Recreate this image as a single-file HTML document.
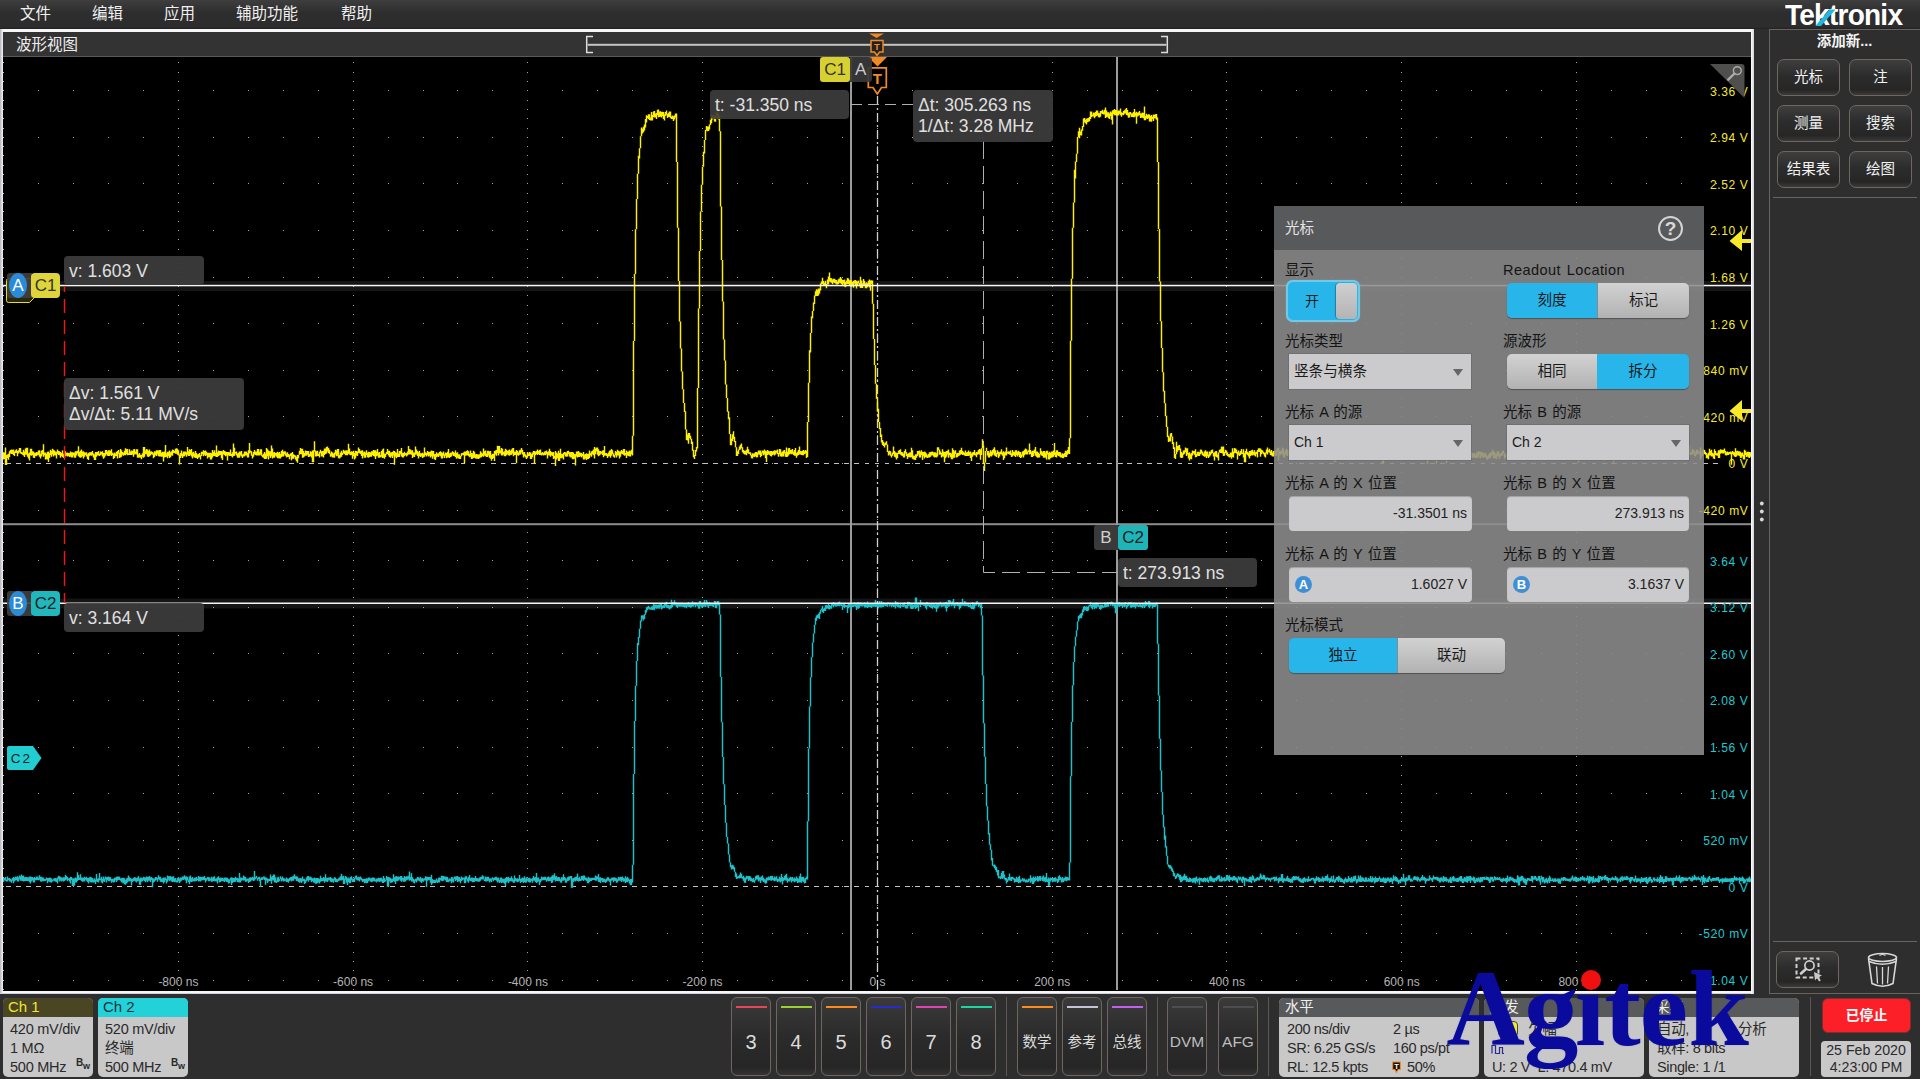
<!DOCTYPE html><html lang="zh"><head><meta charset="utf-8"><title>Tektronix</title><style>
*{box-sizing:border-box;margin:0;padding:0}
html,body{width:1920px;height:1079px;overflow:hidden;background:#2e2e2e}
body{position:relative;font-family:"Liberation Sans","Noto Sans CJK SC",sans-serif;color:#e6e6e6;font-size:15px}
.abs{position:absolute}
#menubar{left:0;top:0;width:1920px;height:29px;background:linear-gradient(#3e3e3e 0,#2d2d2d 13px,#2d2d2d 27px,#212121 29px)}
.mi{position:absolute;top:0;height:29px;line-height:28px;font-size:15.5px;color:#f0f0f0;white-space:nowrap}
#frame{left:0;top:29px;width:1754px;height:965px;background:linear-gradient(90deg,#b4b4bc,#f6f6f8 3px,#f6f6f8);border-bottom:1px solid #d2d2da}
#frameR{left:1751px;top:29px;width:3px;height:965px;background:linear-gradient(90deg,#ffffff,#d0d0d8)}
#titlebar{left:3px;top:32px;width:1748px;height:25px;background:#333;border-bottom:1px solid #5a5a5a}
#titlebar span{position:absolute;left:13px;top:0;line-height:25px;font-size:15.5px;color:#eee}
#plot{left:3px;top:57px;width:1748px;height:934px;background:#000}
svg{position:absolute;left:0;top:0}
.ro{position:absolute;background:rgba(60,60,60,.93);border-radius:4px;color:#e0e0e0;font-size:17.5px;line-height:21.6px;padding:4.6px 0 0 5px;white-space:nowrap}
.ylab{position:absolute;right:171.5px;font-size:12px;letter-spacing:.65px;line-height:14px;white-space:nowrap;text-align:right}
.xlab{position:absolute;top:975px;width:80px;text-align:center;font-size:12px;line-height:14px;color:#b4b4b4;white-space:nowrap}
/* right panel */
#rpanel{left:1769px;top:29px;width:152px;height:965px;border-left:1px solid #6a625d;border-top:1px solid #6a625d;border-bottom:1px solid #6a625d}
.btn{position:absolute;width:63px;height:37px;border:1px solid #6f6660;border-radius:7px;background:linear-gradient(#3e3e3e,#2c2c2c 45%,#262626 85%,#3a3a3a);color:#f2f2f2;font-size:14.5px;line-height:35px;text-align:center;white-space:nowrap}
.sep{position:absolute;height:1px;background:#6a625d}
/* bottom */
.chb{position:absolute;top:998px;width:90px;height:79px;border-radius:5px;background:#c8c8c8;overflow:hidden;color:#2a2a2a;font-size:14.5px;letter-spacing:-.25px}
.chb .h{height:19px;line-height:18px;padding-left:5px;font-size:15px;letter-spacing:0}
.chb .l{position:absolute;left:7px;white-space:nowrap;line-height:18px}
.nb{position:absolute;top:997px;width:40px;height:79px;border:1px solid #6f6660;border-radius:6px;background:linear-gradient(#3a3a3a,#2b2b2b 50%,#262626 90%,#333);color:#dcdcdc;text-align:center}
.nb i{position:absolute;left:3.5px;right:3.5px;top:7.5px;height:2px;display:block}
.nb span{position:absolute;left:0;right:0;top:32px;line-height:24px;font-size:20px}
.nb span.t{font-size:14.5px}
.vsep{position:absolute;top:997px;width:1px;height:79px;background:#5e5853}
.ib{position:absolute;top:998px;height:79px;border-radius:5px;background:#c8c8c8;overflow:hidden;color:#2a2a2a;font-size:14.5px;letter-spacing:-.35px}
.ib .h{height:19px;line-height:19px;padding-left:6px;background:#58595b;color:#eee;font-size:14.5px}
.ib .l{position:absolute;white-space:nowrap;line-height:19px}
/* dialog */
#dlg{left:1274px;top:206px;width:430px;height:549px;background:rgba(141,141,141,.88);}
#dlg .hd{position:absolute;left:0;top:0;width:430px;height:44px;background:#58595b}
#dlg .lb{position:absolute;word-spacing:1.2px;font-size:14.5px;line-height:18px;color:#141414;white-space:nowrap}
.seg{position:absolute;height:35px;border-radius:5px;overflow:hidden;box-shadow:0 1px 1px rgba(0,0,0,.35)}
.seg div{position:absolute;top:0;height:35px;line-height:35px;text-align:center;font-size:14.6px;color:#1a1a1a}
.seg .on{background:#27b5ea}
.seg .off{background:linear-gradient(#d2d2d2,#c2c2c2 50%,#b2b2b2)}
.dd{position:absolute;width:182px;height:35px;background:#cbcbcd;color:#1a1a1a;font-size:14px;line-height:34px;padding-left:5px;box-shadow:0 0 0 1px rgba(100,100,100,.55)}
.dd:after{content:"";position:absolute;right:8px;top:15px;border:5px solid transparent;border-top:7px solid #666;border-bottom:0}
.inp{position:absolute;width:183px;height:35px;background:#cbcbcd;border-radius:4px;color:#222;font-size:14px;line-height:35px;text-align:right;padding-right:5px;box-shadow:inset 0 1px 1px rgba(0,0,0,.2)}
</style></head><body><div id="menubar" class="abs"><div class="mi" style="left:20px">文件</div><div class="mi" style="left:92px">编辑</div><div class="mi" style="left:164px">应用</div><div class="mi" style="left:236px">辅助功能</div><div class="mi" style="left:341px">帮助</div></div><div id="frame" class="abs"></div><div id="frameR" class="abs"></div><div id="titlebar" class="abs"><span>波形视图</span></div><div id="plot" class="abs"></div><svg width="1920" height="1079" viewBox="0 0 1920 1079"><defs><clipPath id="cp"><rect x="3" y="57" width="1748" height="934"/></clipPath></defs><g clip-path="url(#cp)"><rect x="3" y="281" width="1748" height="10" fill="#151515"/><rect x="3" y="598.500" width="1748" height="10" fill="#151515"/><path d="M38 90h1M38 137h1M38 183h1M38 230h1M38 277h1M38 323h1M38 370h1M38 416h1M38 463h1M38 510h1M38 560h1M38 607h1M38 653h1M38 700h1M38 747h1M38 793h1M38 840h1M38 886h1M38 933h1M38 980h1M73 90h1M73 137h1M73 183h1M73 230h1M73 277h1M73 323h1M73 370h1M73 416h1M73 463h1M73 510h1M73 560h1M73 607h1M73 653h1M73 700h1M73 747h1M73 793h1M73 840h1M73 886h1M73 933h1M73 980h1M108 90h1M108 137h1M108 183h1M108 230h1M108 277h1M108 323h1M108 370h1M108 416h1M108 463h1M108 510h1M108 560h1M108 607h1M108 653h1M108 700h1M108 747h1M108 793h1M108 840h1M108 886h1M108 933h1M108 980h1M143 90h1M143 137h1M143 183h1M143 230h1M143 277h1M143 323h1M143 370h1M143 416h1M143 463h1M143 510h1M143 560h1M143 607h1M143 653h1M143 700h1M143 747h1M143 793h1M143 840h1M143 886h1M143 933h1M143 980h1M178 62h1M178 72h1M178 81h1M178 90h1M178 100h1M178 109h1M178 118h1M178 128h1M178 137h1M178 146h1M178 155h1M178 165h1M178 174h1M178 183h1M178 193h1M178 202h1M178 211h1M178 221h1M178 230h1M178 239h1M178 249h1M178 258h1M178 267h1M178 277h1M178 286h1M178 295h1M178 305h1M178 314h1M178 323h1M178 333h1M178 342h1M178 351h1M178 360h1M178 370h1M178 379h1M178 388h1M178 398h1M178 407h1M178 416h1M178 426h1M178 435h1M178 444h1M178 454h1M178 463h1M178 472h1M178 482h1M178 491h1M178 500h1M178 510h1M178 519h1M178 532h1M178 542h1M178 551h1M178 560h1M178 570h1M178 579h1M178 588h1M178 597h1M178 607h1M178 616h1M178 625h1M178 635h1M178 644h1M178 653h1M178 663h1M178 672h1M178 681h1M178 691h1M178 700h1M178 709h1M178 719h1M178 728h1M178 737h1M178 747h1M178 756h1M178 765h1M178 775h1M178 784h1M178 793h1M178 802h1M178 812h1M178 821h1M178 830h1M178 840h1M178 849h1M178 858h1M178 868h1M178 877h1M178 886h1M178 896h1M178 905h1M178 914h1M178 924h1M178 933h1M178 942h1M178 952h1M178 961h1M178 970h1M178 980h1M178 989h1M213 90h1M213 137h1M213 183h1M213 230h1M213 277h1M213 323h1M213 370h1M213 416h1M213 463h1M213 510h1M213 560h1M213 607h1M213 653h1M213 700h1M213 747h1M213 793h1M213 840h1M213 886h1M213 933h1M213 980h1M248 90h1M248 137h1M248 183h1M248 230h1M248 277h1M248 323h1M248 370h1M248 416h1M248 463h1M248 510h1M248 560h1M248 607h1M248 653h1M248 700h1M248 747h1M248 793h1M248 840h1M248 886h1M248 933h1M248 980h1M283 90h1M283 137h1M283 183h1M283 230h1M283 277h1M283 323h1M283 370h1M283 416h1M283 463h1M283 510h1M283 560h1M283 607h1M283 653h1M283 700h1M283 747h1M283 793h1M283 840h1M283 886h1M283 933h1M283 980h1M318 90h1M318 137h1M318 183h1M318 230h1M318 277h1M318 323h1M318 370h1M318 416h1M318 463h1M318 510h1M318 560h1M318 607h1M318 653h1M318 700h1M318 747h1M318 793h1M318 840h1M318 886h1M318 933h1M318 980h1M353 62h1M353 72h1M353 81h1M353 90h1M353 100h1M353 109h1M353 118h1M353 128h1M353 137h1M353 146h1M353 155h1M353 165h1M353 174h1M353 183h1M353 193h1M353 202h1M353 211h1M353 221h1M353 230h1M353 239h1M353 249h1M353 258h1M353 267h1M353 277h1M353 286h1M353 295h1M353 305h1M353 314h1M353 323h1M353 333h1M353 342h1M353 351h1M353 360h1M353 370h1M353 379h1M353 388h1M353 398h1M353 407h1M353 416h1M353 426h1M353 435h1M353 444h1M353 454h1M353 463h1M353 472h1M353 482h1M353 491h1M353 500h1M353 510h1M353 519h1M353 532h1M353 542h1M353 551h1M353 560h1M353 570h1M353 579h1M353 588h1M353 597h1M353 607h1M353 616h1M353 625h1M353 635h1M353 644h1M353 653h1M353 663h1M353 672h1M353 681h1M353 691h1M353 700h1M353 709h1M353 719h1M353 728h1M353 737h1M353 747h1M353 756h1M353 765h1M353 775h1M353 784h1M353 793h1M353 802h1M353 812h1M353 821h1M353 830h1M353 840h1M353 849h1M353 858h1M353 868h1M353 877h1M353 886h1M353 896h1M353 905h1M353 914h1M353 924h1M353 933h1M353 942h1M353 952h1M353 961h1M353 970h1M353 980h1M353 989h1M388 90h1M388 137h1M388 183h1M388 230h1M388 277h1M388 323h1M388 370h1M388 416h1M388 463h1M388 510h1M388 560h1M388 607h1M388 653h1M388 700h1M388 747h1M388 793h1M388 840h1M388 886h1M388 933h1M388 980h1M423 90h1M423 137h1M423 183h1M423 230h1M423 277h1M423 323h1M423 370h1M423 416h1M423 463h1M423 510h1M423 560h1M423 607h1M423 653h1M423 700h1M423 747h1M423 793h1M423 840h1M423 886h1M423 933h1M423 980h1M457 90h1M457 137h1M457 183h1M457 230h1M457 277h1M457 323h1M457 370h1M457 416h1M457 463h1M457 510h1M457 560h1M457 607h1M457 653h1M457 700h1M457 747h1M457 793h1M457 840h1M457 886h1M457 933h1M457 980h1M492 90h1M492 137h1M492 183h1M492 230h1M492 277h1M492 323h1M492 370h1M492 416h1M492 463h1M492 510h1M492 560h1M492 607h1M492 653h1M492 700h1M492 747h1M492 793h1M492 840h1M492 886h1M492 933h1M492 980h1M527 62h1M527 72h1M527 81h1M527 90h1M527 100h1M527 109h1M527 118h1M527 128h1M527 137h1M527 146h1M527 155h1M527 165h1M527 174h1M527 183h1M527 193h1M527 202h1M527 211h1M527 221h1M527 230h1M527 239h1M527 249h1M527 258h1M527 267h1M527 277h1M527 286h1M527 295h1M527 305h1M527 314h1M527 323h1M527 333h1M527 342h1M527 351h1M527 360h1M527 370h1M527 379h1M527 388h1M527 398h1M527 407h1M527 416h1M527 426h1M527 435h1M527 444h1M527 454h1M527 463h1M527 472h1M527 482h1M527 491h1M527 500h1M527 510h1M527 519h1M527 532h1M527 542h1M527 551h1M527 560h1M527 570h1M527 579h1M527 588h1M527 597h1M527 607h1M527 616h1M527 625h1M527 635h1M527 644h1M527 653h1M527 663h1M527 672h1M527 681h1M527 691h1M527 700h1M527 709h1M527 719h1M527 728h1M527 737h1M527 747h1M527 756h1M527 765h1M527 775h1M527 784h1M527 793h1M527 802h1M527 812h1M527 821h1M527 830h1M527 840h1M527 849h1M527 858h1M527 868h1M527 877h1M527 886h1M527 896h1M527 905h1M527 914h1M527 924h1M527 933h1M527 942h1M527 952h1M527 961h1M527 970h1M527 980h1M527 989h1M562 90h1M562 137h1M562 183h1M562 230h1M562 277h1M562 323h1M562 370h1M562 416h1M562 463h1M562 510h1M562 560h1M562 607h1M562 653h1M562 700h1M562 747h1M562 793h1M562 840h1M562 886h1M562 933h1M562 980h1M597 90h1M597 137h1M597 183h1M597 230h1M597 277h1M597 323h1M597 370h1M597 416h1M597 463h1M597 510h1M597 560h1M597 607h1M597 653h1M597 700h1M597 747h1M597 793h1M597 840h1M597 886h1M597 933h1M597 980h1M632 90h1M632 137h1M632 183h1M632 230h1M632 277h1M632 323h1M632 370h1M632 416h1M632 463h1M632 510h1M632 560h1M632 607h1M632 653h1M632 700h1M632 747h1M632 793h1M632 840h1M632 886h1M632 933h1M632 980h1M667 90h1M667 137h1M667 183h1M667 230h1M667 277h1M667 323h1M667 370h1M667 416h1M667 463h1M667 510h1M667 560h1M667 607h1M667 653h1M667 700h1M667 747h1M667 793h1M667 840h1M667 886h1M667 933h1M667 980h1M702 62h1M702 72h1M702 81h1M702 90h1M702 100h1M702 109h1M702 118h1M702 128h1M702 137h1M702 146h1M702 155h1M702 165h1M702 174h1M702 183h1M702 193h1M702 202h1M702 211h1M702 221h1M702 230h1M702 239h1M702 249h1M702 258h1M702 267h1M702 277h1M702 286h1M702 295h1M702 305h1M702 314h1M702 323h1M702 333h1M702 342h1M702 351h1M702 360h1M702 370h1M702 379h1M702 388h1M702 398h1M702 407h1M702 416h1M702 426h1M702 435h1M702 444h1M702 454h1M702 463h1M702 472h1M702 482h1M702 491h1M702 500h1M702 510h1M702 519h1M702 532h1M702 542h1M702 551h1M702 560h1M702 570h1M702 579h1M702 588h1M702 597h1M702 607h1M702 616h1M702 625h1M702 635h1M702 644h1M702 653h1M702 663h1M702 672h1M702 681h1M702 691h1M702 700h1M702 709h1M702 719h1M702 728h1M702 737h1M702 747h1M702 756h1M702 765h1M702 775h1M702 784h1M702 793h1M702 802h1M702 812h1M702 821h1M702 830h1M702 840h1M702 849h1M702 858h1M702 868h1M702 877h1M702 886h1M702 896h1M702 905h1M702 914h1M702 924h1M702 933h1M702 942h1M702 952h1M702 961h1M702 970h1M702 980h1M702 989h1M737 90h1M737 137h1M737 183h1M737 230h1M737 277h1M737 323h1M737 370h1M737 416h1M737 463h1M737 510h1M737 560h1M737 607h1M737 653h1M737 700h1M737 747h1M737 793h1M737 840h1M737 886h1M737 933h1M737 980h1M772 90h1M772 137h1M772 183h1M772 230h1M772 277h1M772 323h1M772 370h1M772 416h1M772 463h1M772 510h1M772 560h1M772 607h1M772 653h1M772 700h1M772 747h1M772 793h1M772 840h1M772 886h1M772 933h1M772 980h1M807 90h1M807 137h1M807 183h1M807 230h1M807 277h1M807 323h1M807 370h1M807 416h1M807 463h1M807 510h1M807 560h1M807 607h1M807 653h1M807 700h1M807 747h1M807 793h1M807 840h1M807 886h1M807 933h1M807 980h1M842 90h1M842 137h1M842 183h1M842 230h1M842 277h1M842 323h1M842 370h1M842 416h1M842 463h1M842 510h1M842 560h1M842 607h1M842 653h1M842 700h1M842 747h1M842 793h1M842 840h1M842 886h1M842 933h1M842 980h1M877 62h1M877 72h1M877 81h1M877 90h1M877 100h1M877 109h1M877 118h1M877 128h1M877 137h1M877 146h1M877 155h1M877 165h1M877 174h1M877 183h1M877 193h1M877 202h1M877 211h1M877 221h1M877 230h1M877 239h1M877 249h1M877 258h1M877 267h1M877 277h1M877 286h1M877 295h1M877 305h1M877 314h1M877 323h1M877 333h1M877 342h1M877 351h1M877 360h1M877 370h1M877 379h1M877 388h1M877 398h1M877 407h1M877 416h1M877 426h1M877 435h1M877 444h1M877 454h1M877 463h1M877 472h1M877 482h1M877 491h1M877 500h1M877 510h1M877 519h1M877 532h1M877 542h1M877 551h1M877 560h1M877 570h1M877 579h1M877 588h1M877 597h1M877 607h1M877 616h1M877 625h1M877 635h1M877 644h1M877 653h1M877 663h1M877 672h1M877 681h1M877 691h1M877 700h1M877 709h1M877 719h1M877 728h1M877 737h1M877 747h1M877 756h1M877 765h1M877 775h1M877 784h1M877 793h1M877 802h1M877 812h1M877 821h1M877 830h1M877 840h1M877 849h1M877 858h1M877 868h1M877 877h1M877 886h1M877 896h1M877 905h1M877 914h1M877 924h1M877 933h1M877 942h1M877 952h1M877 961h1M877 970h1M877 980h1M877 989h1M912 90h1M912 137h1M912 183h1M912 230h1M912 277h1M912 323h1M912 370h1M912 416h1M912 463h1M912 510h1M912 560h1M912 607h1M912 653h1M912 700h1M912 747h1M912 793h1M912 840h1M912 886h1M912 933h1M912 980h1M947 90h1M947 137h1M947 183h1M947 230h1M947 277h1M947 323h1M947 370h1M947 416h1M947 463h1M947 510h1M947 560h1M947 607h1M947 653h1M947 700h1M947 747h1M947 793h1M947 840h1M947 886h1M947 933h1M947 980h1M982 90h1M982 137h1M982 183h1M982 230h1M982 277h1M982 323h1M982 370h1M982 416h1M982 463h1M982 510h1M982 560h1M982 607h1M982 653h1M982 700h1M982 747h1M982 793h1M982 840h1M982 886h1M982 933h1M982 980h1M1017 90h1M1017 137h1M1017 183h1M1017 230h1M1017 277h1M1017 323h1M1017 370h1M1017 416h1M1017 463h1M1017 510h1M1017 560h1M1017 607h1M1017 653h1M1017 700h1M1017 747h1M1017 793h1M1017 840h1M1017 886h1M1017 933h1M1017 980h1M1052 62h1M1052 72h1M1052 81h1M1052 90h1M1052 100h1M1052 109h1M1052 118h1M1052 128h1M1052 137h1M1052 146h1M1052 155h1M1052 165h1M1052 174h1M1052 183h1M1052 193h1M1052 202h1M1052 211h1M1052 221h1M1052 230h1M1052 239h1M1052 249h1M1052 258h1M1052 267h1M1052 277h1M1052 286h1M1052 295h1M1052 305h1M1052 314h1M1052 323h1M1052 333h1M1052 342h1M1052 351h1M1052 360h1M1052 370h1M1052 379h1M1052 388h1M1052 398h1M1052 407h1M1052 416h1M1052 426h1M1052 435h1M1052 444h1M1052 454h1M1052 463h1M1052 472h1M1052 482h1M1052 491h1M1052 500h1M1052 510h1M1052 519h1M1052 532h1M1052 542h1M1052 551h1M1052 560h1M1052 570h1M1052 579h1M1052 588h1M1052 597h1M1052 607h1M1052 616h1M1052 625h1M1052 635h1M1052 644h1M1052 653h1M1052 663h1M1052 672h1M1052 681h1M1052 691h1M1052 700h1M1052 709h1M1052 719h1M1052 728h1M1052 737h1M1052 747h1M1052 756h1M1052 765h1M1052 775h1M1052 784h1M1052 793h1M1052 802h1M1052 812h1M1052 821h1M1052 830h1M1052 840h1M1052 849h1M1052 858h1M1052 868h1M1052 877h1M1052 886h1M1052 896h1M1052 905h1M1052 914h1M1052 924h1M1052 933h1M1052 942h1M1052 952h1M1052 961h1M1052 970h1M1052 980h1M1052 989h1M1087 90h1M1087 137h1M1087 183h1M1087 230h1M1087 277h1M1087 323h1M1087 370h1M1087 416h1M1087 463h1M1087 510h1M1087 560h1M1087 607h1M1087 653h1M1087 700h1M1087 747h1M1087 793h1M1087 840h1M1087 886h1M1087 933h1M1087 980h1M1122 90h1M1122 137h1M1122 183h1M1122 230h1M1122 277h1M1122 323h1M1122 370h1M1122 416h1M1122 463h1M1122 510h1M1122 560h1M1122 607h1M1122 653h1M1122 700h1M1122 747h1M1122 793h1M1122 840h1M1122 886h1M1122 933h1M1122 980h1M1157 90h1M1157 137h1M1157 183h1M1157 230h1M1157 277h1M1157 323h1M1157 370h1M1157 416h1M1157 463h1M1157 510h1M1157 560h1M1157 607h1M1157 653h1M1157 700h1M1157 747h1M1157 793h1M1157 840h1M1157 886h1M1157 933h1M1157 980h1M1191 90h1M1191 137h1M1191 183h1M1191 230h1M1191 277h1M1191 323h1M1191 370h1M1191 416h1M1191 463h1M1191 510h1M1191 560h1M1191 607h1M1191 653h1M1191 700h1M1191 747h1M1191 793h1M1191 840h1M1191 886h1M1191 933h1M1191 980h1M1226 62h1M1226 72h1M1226 81h1M1226 90h1M1226 100h1M1226 109h1M1226 118h1M1226 128h1M1226 137h1M1226 146h1M1226 155h1M1226 165h1M1226 174h1M1226 183h1M1226 193h1M1226 202h1M1226 211h1M1226 221h1M1226 230h1M1226 239h1M1226 249h1M1226 258h1M1226 267h1M1226 277h1M1226 286h1M1226 295h1M1226 305h1M1226 314h1M1226 323h1M1226 333h1M1226 342h1M1226 351h1M1226 360h1M1226 370h1M1226 379h1M1226 388h1M1226 398h1M1226 407h1M1226 416h1M1226 426h1M1226 435h1M1226 444h1M1226 454h1M1226 463h1M1226 472h1M1226 482h1M1226 491h1M1226 500h1M1226 510h1M1226 519h1M1226 532h1M1226 542h1M1226 551h1M1226 560h1M1226 570h1M1226 579h1M1226 588h1M1226 597h1M1226 607h1M1226 616h1M1226 625h1M1226 635h1M1226 644h1M1226 653h1M1226 663h1M1226 672h1M1226 681h1M1226 691h1M1226 700h1M1226 709h1M1226 719h1M1226 728h1M1226 737h1M1226 747h1M1226 756h1M1226 765h1M1226 775h1M1226 784h1M1226 793h1M1226 802h1M1226 812h1M1226 821h1M1226 830h1M1226 840h1M1226 849h1M1226 858h1M1226 868h1M1226 877h1M1226 886h1M1226 896h1M1226 905h1M1226 914h1M1226 924h1M1226 933h1M1226 942h1M1226 952h1M1226 961h1M1226 970h1M1226 980h1M1226 989h1M1261 90h1M1261 137h1M1261 183h1M1261 230h1M1261 277h1M1261 323h1M1261 370h1M1261 416h1M1261 463h1M1261 510h1M1261 560h1M1261 607h1M1261 653h1M1261 700h1M1261 747h1M1261 793h1M1261 840h1M1261 886h1M1261 933h1M1261 980h1M1296 90h1M1296 137h1M1296 183h1M1296 230h1M1296 277h1M1296 323h1M1296 370h1M1296 416h1M1296 463h1M1296 510h1M1296 560h1M1296 607h1M1296 653h1M1296 700h1M1296 747h1M1296 793h1M1296 840h1M1296 886h1M1296 933h1M1296 980h1M1331 90h1M1331 137h1M1331 183h1M1331 230h1M1331 277h1M1331 323h1M1331 370h1M1331 416h1M1331 463h1M1331 510h1M1331 560h1M1331 607h1M1331 653h1M1331 700h1M1331 747h1M1331 793h1M1331 840h1M1331 886h1M1331 933h1M1331 980h1M1366 90h1M1366 137h1M1366 183h1M1366 230h1M1366 277h1M1366 323h1M1366 370h1M1366 416h1M1366 463h1M1366 510h1M1366 560h1M1366 607h1M1366 653h1M1366 700h1M1366 747h1M1366 793h1M1366 840h1M1366 886h1M1366 933h1M1366 980h1M1401 62h1M1401 72h1M1401 81h1M1401 90h1M1401 100h1M1401 109h1M1401 118h1M1401 128h1M1401 137h1M1401 146h1M1401 155h1M1401 165h1M1401 174h1M1401 183h1M1401 193h1M1401 202h1M1401 211h1M1401 221h1M1401 230h1M1401 239h1M1401 249h1M1401 258h1M1401 267h1M1401 277h1M1401 286h1M1401 295h1M1401 305h1M1401 314h1M1401 323h1M1401 333h1M1401 342h1M1401 351h1M1401 360h1M1401 370h1M1401 379h1M1401 388h1M1401 398h1M1401 407h1M1401 416h1M1401 426h1M1401 435h1M1401 444h1M1401 454h1M1401 463h1M1401 472h1M1401 482h1M1401 491h1M1401 500h1M1401 510h1M1401 519h1M1401 532h1M1401 542h1M1401 551h1M1401 560h1M1401 570h1M1401 579h1M1401 588h1M1401 597h1M1401 607h1M1401 616h1M1401 625h1M1401 635h1M1401 644h1M1401 653h1M1401 663h1M1401 672h1M1401 681h1M1401 691h1M1401 700h1M1401 709h1M1401 719h1M1401 728h1M1401 737h1M1401 747h1M1401 756h1M1401 765h1M1401 775h1M1401 784h1M1401 793h1M1401 802h1M1401 812h1M1401 821h1M1401 830h1M1401 840h1M1401 849h1M1401 858h1M1401 868h1M1401 877h1M1401 886h1M1401 896h1M1401 905h1M1401 914h1M1401 924h1M1401 933h1M1401 942h1M1401 952h1M1401 961h1M1401 970h1M1401 980h1M1401 989h1M1436 90h1M1436 137h1M1436 183h1M1436 230h1M1436 277h1M1436 323h1M1436 370h1M1436 416h1M1436 463h1M1436 510h1M1436 560h1M1436 607h1M1436 653h1M1436 700h1M1436 747h1M1436 793h1M1436 840h1M1436 886h1M1436 933h1M1436 980h1M1471 90h1M1471 137h1M1471 183h1M1471 230h1M1471 277h1M1471 323h1M1471 370h1M1471 416h1M1471 463h1M1471 510h1M1471 560h1M1471 607h1M1471 653h1M1471 700h1M1471 747h1M1471 793h1M1471 840h1M1471 886h1M1471 933h1M1471 980h1M1506 90h1M1506 137h1M1506 183h1M1506 230h1M1506 277h1M1506 323h1M1506 370h1M1506 416h1M1506 463h1M1506 510h1M1506 560h1M1506 607h1M1506 653h1M1506 700h1M1506 747h1M1506 793h1M1506 840h1M1506 886h1M1506 933h1M1506 980h1M1541 90h1M1541 137h1M1541 183h1M1541 230h1M1541 277h1M1541 323h1M1541 370h1M1541 416h1M1541 463h1M1541 510h1M1541 560h1M1541 607h1M1541 653h1M1541 700h1M1541 747h1M1541 793h1M1541 840h1M1541 886h1M1541 933h1M1541 980h1M1576 62h1M1576 72h1M1576 81h1M1576 90h1M1576 100h1M1576 109h1M1576 118h1M1576 128h1M1576 137h1M1576 146h1M1576 155h1M1576 165h1M1576 174h1M1576 183h1M1576 193h1M1576 202h1M1576 211h1M1576 221h1M1576 230h1M1576 239h1M1576 249h1M1576 258h1M1576 267h1M1576 277h1M1576 286h1M1576 295h1M1576 305h1M1576 314h1M1576 323h1M1576 333h1M1576 342h1M1576 351h1M1576 360h1M1576 370h1M1576 379h1M1576 388h1M1576 398h1M1576 407h1M1576 416h1M1576 426h1M1576 435h1M1576 444h1M1576 454h1M1576 463h1M1576 472h1M1576 482h1M1576 491h1M1576 500h1M1576 510h1M1576 519h1M1576 532h1M1576 542h1M1576 551h1M1576 560h1M1576 570h1M1576 579h1M1576 588h1M1576 597h1M1576 607h1M1576 616h1M1576 625h1M1576 635h1M1576 644h1M1576 653h1M1576 663h1M1576 672h1M1576 681h1M1576 691h1M1576 700h1M1576 709h1M1576 719h1M1576 728h1M1576 737h1M1576 747h1M1576 756h1M1576 765h1M1576 775h1M1576 784h1M1576 793h1M1576 802h1M1576 812h1M1576 821h1M1576 830h1M1576 840h1M1576 849h1M1576 858h1M1576 868h1M1576 877h1M1576 886h1M1576 896h1M1576 905h1M1576 914h1M1576 924h1M1576 933h1M1576 942h1M1576 952h1M1576 961h1M1576 970h1M1576 980h1M1576 989h1M1611 90h1M1611 137h1M1611 183h1M1611 230h1M1611 277h1M1611 323h1M1611 370h1M1611 416h1M1611 463h1M1611 510h1M1611 560h1M1611 607h1M1611 653h1M1611 700h1M1611 747h1M1611 793h1M1611 840h1M1611 886h1M1611 933h1M1611 980h1M1646 90h1M1646 137h1M1646 183h1M1646 230h1M1646 277h1M1646 323h1M1646 370h1M1646 416h1M1646 463h1M1646 510h1M1646 560h1M1646 607h1M1646 653h1M1646 700h1M1646 747h1M1646 793h1M1646 840h1M1646 886h1M1646 933h1M1646 980h1M1681 90h1M1681 137h1M1681 183h1M1681 230h1M1681 277h1M1681 323h1M1681 370h1M1681 416h1M1681 463h1M1681 510h1M1681 560h1M1681 607h1M1681 653h1M1681 700h1M1681 747h1M1681 793h1M1681 840h1M1681 886h1M1681 933h1M1681 980h1M1716 90h1M1716 137h1M1716 183h1M1716 230h1M1716 277h1M1716 323h1M1716 370h1M1716 416h1M1716 463h1M1716 510h1M1716 560h1M1716 607h1M1716 653h1M1716 700h1M1716 747h1M1716 793h1M1716 840h1M1716 886h1M1716 933h1M1716 980h1" stroke="#a4a4a4" stroke-width="1" fill="none" shape-rendering="crispEdges" transform="translate(0,.5)"/><path d="M3 519h1M3 510h1M3 500h1M3 491h1M3 482h1M3 472h1M3 463h1M3 454h1M3 444h1M3 435h1M3 426h1M3 416h1M3 407h1M3 398h1M3 388h1M3 379h1M3 370h1M3 360h1M3 351h1M3 342h1M3 333h1M3 323h1M3 314h1M3 305h1M3 295h1M3 286h1M3 277h1M3 267h1M3 258h1M3 249h1M3 239h1M3 230h1M3 221h1M3 211h1M3 202h1M3 193h1M3 183h1M3 174h1M3 165h1M3 155h1M3 146h1M3 137h1M3 128h1M3 118h1M3 109h1M3 100h1M3 90h1M3 81h1M3 72h1M3 62h1M3 989h1M3 980h1M3 970h1M3 961h1M3 952h1M3 942h1M3 933h1M3 924h1M3 914h1M3 905h1M3 896h1M3 886h1M3 877h1M3 868h1M3 858h1M3 849h1M3 840h1M3 830h1M3 821h1M3 812h1M3 802h1M3 793h1M3 784h1M3 775h1M3 765h1M3 756h1M3 747h1M3 737h1M3 728h1M3 719h1M3 709h1M3 700h1M3 691h1M3 681h1M3 672h1M3 663h1M3 653h1M3 644h1M3 635h1M3 625h1M3 616h1M3 607h1M3 597h1M3 588h1M3 579h1M3 570h1M3 560h1M3 551h1M3 542h1M3 532h1" stroke="#c8c8c8" stroke-width="1" fill="none" shape-rendering="crispEdges" transform="translate(0,.5)"/><line x1="6" y1="463.5" x2="1722" y2="463.5" stroke="#c4c4c4" stroke-width="1" stroke-dasharray="4.7 5.4" shape-rendering="crispEdges"/><line x1="6" y1="886.5" x2="1722" y2="886.5" stroke="#c4c4c4" stroke-width="1" stroke-dasharray="4.7 5.4" shape-rendering="crispEdges"/><rect x="3" y="523.2" width="1748" height="2" fill="#8c8c8c"/><rect x="850" y="57" width="2" height="933" fill="#9c9c9c"/><rect x="1116" y="57" width="2" height="933" fill="#9c9c9c"/><line x1="877.5" y1="96" x2="877.5" y2="990" stroke="#d0d0d0" stroke-width="1.3" stroke-dasharray="9 3 2 3"/><path d="M851 104.5H914" stroke="#b0b0b0" stroke-width="1" stroke-dasharray="11 6" fill="none"/><path d="M983.5 141V572.5H1118" stroke="#b0b0b0" stroke-width="1" stroke-dasharray="18 7" fill="none"/><path fill="none" stroke="#fff000" stroke-width="1.45" d="M3.5 452.2V459.5M4.5 452.6V458.9M5.5 447.5V464.9M6.5 455.0V464.9M7.5 454.5V457.9M8.5 453.8V459.7M9.5 451.2V457.0M10.5 450.0V453.4M11.5 449.4V454.1M12.5 449.8V454.0M13.5 449.4V454.9M14.5 451.5V456.1M15.5 450.2V453.1M16.5 449.3V452.9M17.5 450.9V456.3M18.5 450.2V453.5M19.5 448.0V452.3M20.5 448.0V453.6M21.5 452.0V454.1M22.5 452.6V454.7M23.5 449.8V455.6M24.5 451.5V457.1M25.5 448.5V454.8M26.5 447.8V454.8M27.5 447.8V456.8M28.5 453.6V458.6M29.5 452.6V460.5M30.5 448.7V455.2M31.5 448.7V455.8M32.5 451.3V454.9M33.5 451.6V457.8M34.5 452.7V458.0M35.5 452.7V456.1M36.5 452.0V456.3M37.5 452.3V455.2M38.5 450.6V455.1M39.5 450.2V456.8M40.5 453.8V458.5M41.5 450.8V456.6M42.5 450.0V454.2M43.5 444.2V456.8M44.5 452.6V455.2M45.5 452.6V459.5M46.5 453.7V459.5M47.5 451.8V459.5M48.5 451.5V462.0M49.5 453.1V458.1M50.5 449.8V455.0M51.5 451.0V456.7M52.5 448.8V454.2M53.5 449.8V456.4M54.5 450.5V455.2M55.5 451.6V455.6M56.5 451.8V458.5M57.5 449.5V453.7M58.5 451.1V455.1M59.5 451.2V455.2M60.5 451.9V457.7M61.5 453.1V456.1M62.5 450.5V457.0M63.5 453.7V458.0M64.5 453.7V457.9M65.5 451.3V456.2M66.5 453.0V455.8M67.5 452.5V456.5M68.5 453.0V456.0M69.5 452.9V456.9M70.5 451.6V456.4M71.5 452.3V457.4M72.5 452.3V457.5M73.5 452.4V455.5M74.5 452.4V457.8M75.5 451.3V457.8M76.5 451.3V455.6M77.5 450.7V453.6M78.5 446.3V456.3M79.5 452.1V457.3M80.5 450.8V457.8M81.5 449.5V457.2M82.5 451.5V455.9M83.5 451.3V458.5M84.5 452.3V456.7M85.5 452.4V454.9M86.5 452.2V456.5M87.5 454.2V458.9M88.5 453.1V460.1M89.5 452.2V456.0M90.5 452.3V455.2M91.5 452.0V455.7M92.5 450.9V455.2M93.5 453.4V457.4M94.5 454.4V460.0M95.5 452.0V460.0M96.5 452.0V456.7M97.5 451.9V455.6M98.5 451.1V455.6M99.5 453.7V456.0M100.5 451.6V455.3M101.5 451.9V454.5M102.5 451.2V456.4M103.5 452.9V458.7M104.5 452.9V457.5M105.5 450.1V455.8M106.5 449.9V454.2M107.5 451.6V455.7M108.5 450.2V455.9M109.5 450.2V456.1M110.5 450.7V454.7M111.5 449.2V456.0M112.5 452.7V455.1M113.5 453.8V458.9M114.5 452.4V458.0M115.5 453.4V456.2M116.5 451.7V456.1M117.5 451.1V458.4M118.5 450.1V453.7M119.5 452.8V458.1M120.5 449.0V457.6M121.5 450.2V456.7M122.5 452.0V454.8M123.5 452.7V455.8M124.5 450.7V455.0M125.5 448.2V455.3M126.5 449.3V454.1M127.5 449.1V455.3M128.5 453.2V454.9M129.5 449.2V454.9M130.5 451.5V455.1M131.5 450.6V455.1M132.5 451.1V454.4M133.5 449.6V456.7M134.5 449.1V454.5M135.5 451.6V454.3M136.5 449.3V454.4M137.5 449.3V457.8M138.5 454.3V457.8M139.5 453.1V457.6M140.5 454.7V457.8M141.5 454.9V459.2M142.5 453.3V456.8M143.5 447.0V457.7M144.5 447.0V456.8M145.5 450.6V454.3M146.5 449.0V454.3M147.5 449.6V456.6M148.5 450.8V457.0M149.5 449.6V456.3M150.5 451.6V455.4M151.5 451.3V454.3M152.5 451.9V454.7M153.5 453.3V458.3M154.5 451.2V456.9M155.5 451.5V455.2M156.5 450.3V456.0M157.5 450.3V454.2M158.5 450.4V456.3M159.5 450.1V456.4M160.5 450.1V456.5M161.5 452.8V456.8M162.5 451.7V456.8M163.5 451.9V461.6M164.5 451.4V457.4M165.5 445.0V456.9M166.5 453.2V456.8M167.5 451.8V458.2M168.5 451.7V456.1M169.5 450.4V457.9M170.5 452.3V457.2M171.5 451.3V455.5M172.5 449.6V455.7M173.5 449.9V453.1M174.5 450.9V453.1M175.5 448.8V453.8M176.5 448.3V453.8M177.5 448.8V454.7M178.5 450.3V455.6M179.5 454.5V464.5M180.5 453.1V457.9M181.5 450.4V456.1M182.5 453.4V458.0M183.5 451.5V456.5M184.5 451.5V456.3M185.5 451.6V454.7M186.5 452.2V456.7M187.5 446.9V454.8M188.5 451.3V456.0M189.5 449.2V456.0M190.5 450.1V454.7M191.5 449.1V456.5M192.5 452.6V458.5M193.5 451.7V456.4M194.5 453.6V457.4M195.5 451.0V457.9M196.5 453.1V457.9M197.5 454.5V459.0M198.5 453.9V457.8M199.5 453.1V457.1M200.5 455.3V459.6M201.5 451.7V456.1M202.5 451.8V454.0M203.5 450.3V456.2M204.5 451.1V454.8M205.5 450.4V456.0M206.5 451.7V455.2M207.5 452.7V458.4M208.5 452.7V457.2M209.5 452.8V457.2M210.5 452.8V459.6M211.5 453.2V459.6M212.5 449.9V457.4M213.5 451.9V456.1M214.5 450.2V456.1M215.5 452.9V456.6M216.5 445.6V456.9M217.5 452.3V456.9M218.5 450.5V455.9M219.5 451.1V455.2M220.5 451.1V455.1M221.5 450.9V458.2M222.5 451.4V460.0M223.5 450.1V454.2M224.5 451.1V454.9M225.5 451.4V456.3M226.5 451.9V455.4M227.5 452.1V460.5M228.5 452.1V455.3M229.5 452.2V456.0M230.5 449.5V455.9M231.5 454.1V456.2M232.5 452.3V457.5M233.5 443.4V456.0M234.5 447.8V455.7M235.5 452.1V453.8M236.5 451.5V455.4M237.5 453.4V457.7M238.5 452.8V457.7M239.5 451.5V457.7M240.5 451.5V455.5M241.5 451.1V456.4M242.5 454.5V458.1M243.5 453.8V456.4M244.5 451.5V456.5M245.5 451.4V455.4M246.5 451.4V455.5M247.5 452.9V457.6M248.5 450.2V457.6M249.5 443.0V453.6M250.5 450.6V452.5M251.5 451.3V455.7M252.5 454.6V458.4M253.5 451.9V456.7M254.5 449.9V454.6M255.5 451.6V455.1M256.5 451.5V455.6M257.5 448.9V455.5M258.5 449.1V455.6M259.5 451.8V455.6M260.5 449.2V454.8M261.5 449.2V455.8M262.5 454.9V457.3M263.5 453.8V457.7M264.5 451.9V458.9M265.5 453.6V458.9M266.5 448.0V458.7M267.5 449.3V456.2M268.5 450.6V459.5M269.5 451.2V455.8M270.5 451.2V458.0M271.5 445.4V456.2M272.5 448.6V458.5M273.5 452.6V457.8M274.5 451.9V457.8M275.5 453.0V455.8M276.5 452.7V456.7M277.5 451.7V458.3M278.5 452.7V458.2M279.5 452.0V458.5M280.5 453.9V458.5M281.5 451.1V456.9M282.5 449.7V456.6M283.5 451.5V456.6M284.5 451.2V454.2M285.5 451.5V455.7M286.5 453.4V457.4M287.5 452.3V456.9M288.5 454.1V456.9M289.5 454.8V459.2M290.5 453.4V456.1M291.5 452.9V460.2M292.5 452.0V458.7M293.5 454.2V458.7M294.5 454.9V456.9M295.5 455.4V459.5M296.5 456.7V461.3M297.5 455.0V462.8M298.5 454.7V458.2M299.5 450.8V454.8M300.5 448.0V454.0M301.5 448.8V454.2M302.5 448.8V457.8M303.5 451.0V457.4M304.5 452.9V456.4M305.5 450.5V455.8M306.5 451.0V455.8M307.5 451.0V454.8M308.5 451.1V457.1M309.5 454.1V456.8M310.5 451.3V456.1M311.5 452.0V457.4M312.5 450.6V462.3M313.5 450.3V462.3M314.5 441.3V451.8M315.5 450.5V456.4M316.5 451.3V456.4M317.5 450.7V456.1M318.5 453.9V456.0M319.5 451.8V457.5M320.5 449.8V453.3M321.5 451.3V456.6M322.5 451.0V456.6M323.5 450.7V457.6M324.5 448.6V455.0M325.5 448.6V453.9M326.5 446.9V453.6M327.5 446.5V451.6M328.5 447.9V452.9M329.5 449.8V454.1M330.5 453.6V456.7M331.5 451.6V456.6M332.5 452.5V457.5M333.5 453.5V457.5M334.5 452.6V457.8M335.5 449.8V454.5M336.5 450.6V456.2M337.5 449.0V455.8M338.5 449.0V458.2M339.5 455.1V458.5M340.5 452.6V457.5M341.5 450.8V456.7M342.5 452.7V455.0M343.5 449.8V453.5M344.5 450.7V454.0M345.5 450.6V455.2M346.5 450.3V455.3M347.5 450.4V455.2M348.5 443.7V453.8M349.5 448.4V454.5M350.5 452.0V455.3M351.5 451.2V455.0M352.5 451.8V458.7M353.5 450.8V456.2M354.5 453.0V459.5M355.5 450.7V458.2M356.5 451.1V455.6M357.5 451.5V455.9M358.5 447.6V452.9M359.5 449.1V453.3M360.5 450.9V453.9M361.5 450.5V455.9M362.5 450.2V458.4M363.5 452.2V455.8M364.5 451.6V457.8M365.5 452.6V457.8M366.5 450.2V455.1M367.5 452.8V457.2M368.5 451.8V457.8M369.5 452.1V457.1M370.5 452.6V456.7M371.5 451.3V456.7M372.5 451.3V454.9M373.5 450.0V456.1M374.5 450.2V456.4M375.5 450.2V459.1M376.5 451.6V456.2M377.5 448.9V455.7M378.5 452.6V457.8M379.5 452.1V457.8M380.5 455.0V457.2M381.5 451.1V456.8M382.5 449.4V457.9M383.5 448.4V457.7M384.5 453.6V458.7M385.5 453.7V457.0M386.5 451.9V454.5M387.5 449.1V453.9M388.5 450.7V455.5M389.5 450.7V457.1M390.5 452.6V457.7M391.5 452.3V456.3M392.5 451.9V457.9M393.5 450.7V455.4M394.5 451.1V464.8M395.5 452.2V456.8M396.5 452.8V458.3M397.5 449.1V457.0M398.5 453.6V456.9M399.5 450.9V456.9M400.5 450.8V454.2M401.5 448.1V456.4M402.5 452.8V457.5M403.5 453.0V457.5M404.5 451.8V455.9M405.5 453.2V455.0M406.5 453.0V456.5M407.5 451.4V455.6M408.5 445.9V454.5M409.5 448.9V454.5M410.5 449.6V454.5M411.5 450.6V454.8M412.5 450.2V457.9M413.5 452.5V456.8M414.5 452.5V457.1M415.5 446.5V454.7M416.5 449.6V454.4M417.5 450.9V456.1M418.5 452.2V458.5M419.5 450.8V455.9M420.5 453.3V457.1M421.5 453.3V456.3M422.5 452.7V457.9M423.5 453.4V457.2M424.5 447.6V456.8M425.5 452.2V455.1M426.5 453.1V456.6M427.5 450.9V455.2M428.5 451.7V456.4M429.5 452.0V455.8M430.5 451.6V457.5M431.5 450.4V456.2M432.5 451.0V458.7M433.5 451.0V456.6M434.5 454.0V459.3M435.5 454.0V459.9M436.5 452.3V457.2M437.5 453.5V456.6M438.5 453.3V457.0M439.5 451.9V455.4M440.5 451.2V456.2M441.5 452.3V458.4M442.5 452.9V458.4M443.5 451.5V455.8M444.5 454.2V458.0M445.5 452.6V455.8M446.5 452.9V458.2M447.5 451.8V457.6M448.5 449.1V457.6M449.5 453.6V458.0M450.5 452.8V457.0M451.5 452.4V456.5M452.5 451.3V454.5M453.5 451.9V456.0M454.5 453.1V456.2M455.5 450.5V457.0M456.5 452.9V458.7M457.5 452.2V457.8M458.5 454.3V458.6M459.5 454.3V458.9M460.5 455.9V458.9M461.5 453.2V456.2M462.5 452.9V454.8M463.5 452.6V455.3M464.5 451.6V463.4M465.5 451.7V455.7M466.5 451.1V455.6M467.5 450.2V455.2M468.5 451.3V456.0M469.5 453.7V457.2M470.5 450.6V456.7M471.5 453.0V459.0M472.5 453.2V458.7M473.5 450.8V458.0M474.5 451.7V457.8M475.5 454.3V458.4M476.5 453.9V458.8M477.5 454.3V458.8M478.5 454.6V459.0M479.5 454.3V458.3M480.5 451.3V457.6M481.5 452.4V457.2M482.5 453.4V455.9M483.5 448.6V456.7M484.5 451.2V455.6M485.5 450.5V456.2M486.5 453.5V457.0M487.5 450.8V457.1M488.5 450.8V455.5M489.5 451.6V457.8M490.5 451.1V458.7M491.5 454.9V460.8M492.5 453.7V459.0M493.5 453.7V458.0M494.5 450.9V461.1M495.5 450.4V454.5M496.5 450.1V455.7M497.5 445.8V453.0M498.5 446.0V455.6M499.5 446.0V453.5M500.5 450.3V453.6M501.5 448.1V455.4M502.5 448.7V455.4M503.5 452.0V454.6M504.5 451.2V456.3M505.5 448.8V456.3M506.5 449.7V455.3M507.5 450.9V454.2M508.5 450.2V455.3M509.5 449.5V455.7M510.5 451.1V454.9M511.5 449.6V454.7M512.5 448.2V453.4M513.5 448.1V456.2M514.5 451.8V455.0M515.5 451.4V455.0M516.5 449.9V463.3M517.5 450.9V455.0M518.5 452.6V455.7M519.5 450.3V454.8M520.5 449.7V454.6M521.5 448.0V452.5M522.5 449.8V454.6M523.5 452.3V457.4M524.5 451.9V456.3M525.5 454.2V457.6M526.5 455.5V459.1M527.5 452.0V457.8M528.5 453.5V456.1M529.5 452.0V456.0M530.5 452.5V459.0M531.5 454.0V459.0M532.5 452.6V457.3M533.5 451.1V454.6M534.5 451.1V464.1M535.5 451.7V455.2M536.5 451.1V453.9M537.5 449.6V455.0M538.5 451.0V453.9M539.5 450.0V455.0M540.5 449.6V454.9M541.5 452.9V455.4M542.5 452.0V454.7M543.5 452.9V455.6M544.5 451.6V454.9M545.5 451.3V455.2M546.5 450.6V454.2M547.5 452.0V458.5M548.5 451.2V455.2M549.5 448.8V455.4M550.5 451.1V456.7M551.5 452.1V455.2M552.5 452.3V455.9M553.5 452.1V459.0M554.5 455.9V458.3M555.5 451.1V465.9M556.5 452.6V459.5M557.5 453.4V458.1M558.5 450.7V461.1M559.5 452.9V461.1M560.5 448.7V458.3M561.5 453.7V458.3M562.5 453.9V457.8M563.5 452.7V459.6M564.5 451.9V454.6M565.5 452.3V456.4M566.5 452.5V456.8M567.5 451.0V456.6M568.5 450.7V453.9M569.5 452.3V456.5M570.5 451.9V457.5M571.5 452.0V457.6M572.5 451.9V459.2M573.5 452.6V459.2M574.5 454.0V458.8M575.5 454.0V465.4M576.5 451.4V456.4M577.5 451.5V457.4M578.5 451.1V456.9M579.5 452.2V457.1M580.5 452.8V456.3M581.5 453.0V457.6M582.5 453.9V456.2M583.5 451.9V459.5M584.5 454.6V459.5M585.5 453.9V458.5M586.5 453.3V459.9M587.5 454.0V459.1M588.5 453.8V459.1M589.5 450.6V457.9M590.5 453.3V455.4M591.5 451.4V456.7M592.5 450.8V454.3M593.5 449.5V455.2M594.5 446.9V458.5M595.5 448.5V454.3M596.5 447.5V451.6M597.5 447.5V454.7M598.5 449.2V456.2M599.5 450.9V455.5M600.5 450.9V454.5M601.5 451.7V453.4M602.5 450.4V454.9M603.5 450.3V457.3M604.5 445.9V455.8M605.5 452.9V455.6M606.5 453.0V456.1M607.5 453.9V458.0M608.5 452.5V456.5M609.5 450.8V455.9M610.5 450.3V457.7M611.5 449.1V455.8M612.5 450.3V454.1M613.5 453.3V456.7M614.5 455.0V457.8M615.5 451.1V455.2M616.5 452.0V457.6M617.5 449.7V455.6M618.5 450.8V455.5M619.5 451.5V458.6M620.5 451.2V456.8M621.5 449.9V453.8M622.5 451.1V454.2M623.5 449.1V454.8M624.5 449.1V455.8M625.5 453.1V455.3M626.5 450.5V457.9M627.5 451.8V455.6M628.5 451.4V455.9M629.5 450.6V456.6M630.5 451.2V456.4M631.5 449.8V454.3M632.5 435.7V455.4M633.5 341.0V435.7M634.5 274.0V341.0M635.5 229.3V274.0M636.5 199.0V229.3M637.5 173.7V199.0M638.5 155.8V173.7M639.5 148.2V158.4M640.5 136.2V148.2M641.5 127.4V136.2M642.5 128.8V133.4M643.5 126.8V132.2M644.5 124.6V130.5M645.5 119.1V127.6M646.5 115.3V122.5M647.5 115.9V117.9M648.5 114.2V118.9M649.5 114.2V119.9M650.5 117.5V120.4M651.5 111.9V120.5M652.5 115.0V120.5M653.5 111.5V117.1M654.5 111.0V117.4M655.5 113.4V117.4M656.5 113.0V119.0M657.5 109.7V115.1M658.5 109.5V117.3M659.5 111.6V117.1M660.5 111.3V116.8M661.5 112.1V117.4M662.5 111.8V115.9M663.5 112.0V118.9M664.5 114.5V120.6M665.5 111.9V116.1M666.5 110.4V114.8M667.5 114.0V117.9M668.5 112.8V116.9M669.5 111.4V116.9M670.5 111.4V118.3M671.5 116.6V119.0M672.5 115.5V119.0M673.5 116.3V121.0M674.5 115.4V119.5M675.5 113.5V117.5M676.5 113.5V161.9M677.5 161.9V227.7M678.5 227.7V280.9M679.5 280.9V321.6M680.5 321.6V348.4M681.5 348.4V371.5M682.5 371.5V389.3M683.5 389.3V403.0M684.5 403.0V412.1M685.5 411.3V429.6M686.5 429.6V440.0M687.5 434.4V440.4M688.5 433.1V443.8M689.5 433.1V438.0M690.5 435.8V439.6M691.5 438.8V443.9M692.5 441.7V450.8M693.5 449.7V457.3M694.5 455.1V458.9M695.5 450.1V456.0M696.5 447.0V451.4M697.5 388.1V448.4M698.5 308.4V388.1M699.5 250.9V308.4M700.5 211.4V250.9M701.5 184.7V211.4M702.5 166.7V184.7M703.5 151.8V166.7M704.5 140.0V153.4M705.5 130.0V140.0M706.5 126.0V130.7M707.5 126.5V131.2M708.5 126.5V131.1M709.5 124.5V129.6M710.5 119.7V125.1M711.5 114.7V123.3M712.5 115.1V119.6M713.5 115.0V119.0M714.5 115.4V121.5M715.5 115.4V121.8M716.5 112.4V117.9M717.5 111.7V118.8M718.5 113.6V119.6M719.5 115.8V131.3M720.5 131.3V206.4M721.5 206.4V260.1M722.5 260.1V301.5M723.5 301.5V339.4M724.5 339.4V360.4M725.5 360.4V384.6M726.5 384.6V397.9M727.5 397.9V411.8M728.5 411.2V419.3M729.5 417.2V434.0M730.5 434.0V445.2M731.5 438.5V445.2M732.5 434.2V441.1M733.5 431.2V438.7M734.5 436.8V442.1M735.5 440.9V447.3M736.5 447.3V456.1M737.5 451.3V456.1M738.5 449.5V454.0M739.5 446.6V450.1M740.5 444.8V449.4M741.5 443.5V448.1M742.5 447.3V452.2M743.5 449.9V453.5M744.5 450.7V454.6M745.5 450.7V454.5M746.5 449.7V455.2M747.5 446.8V452.9M748.5 449.2V453.8M749.5 452.2V454.1M750.5 452.2V455.4M751.5 454.8V458.2M752.5 453.2V458.5M753.5 453.5V456.8M754.5 453.2V457.0M755.5 452.0V456.2M756.5 452.0V457.4M757.5 452.5V457.2M758.5 450.4V454.6M759.5 450.6V454.8M760.5 450.4V457.2M761.5 452.6V456.0M762.5 450.6V453.3M763.5 450.8V455.3M764.5 449.4V454.4M765.5 450.8V458.2M766.5 451.2V461.9M767.5 450.1V455.1M768.5 450.8V454.6M769.5 451.5V454.7M770.5 451.1V456.1M771.5 451.1V456.5M772.5 451.5V455.0M773.5 450.9V454.6M774.5 450.2V455.4M775.5 450.6V454.6M776.5 450.5V452.7M777.5 449.4V454.2M778.5 452.9V456.7M779.5 448.9V454.2M780.5 449.2V456.2M781.5 452.5V456.8M782.5 451.5V456.6M783.5 450.6V456.6M784.5 449.9V453.4M785.5 452.2V456.8M786.5 447.4V457.0M787.5 451.7V456.8M788.5 448.2V455.5M789.5 448.1V454.3M790.5 450.1V453.7M791.5 449.7V454.3M792.5 449.1V453.7M793.5 451.7V454.9M794.5 450.1V455.7M795.5 448.0V455.8M796.5 453.1V457.7M797.5 451.8V455.8M798.5 450.1V454.9M799.5 446.4V454.4M800.5 451.0V454.4M801.5 451.2V454.9M802.5 450.7V455.3M803.5 450.1V455.3M804.5 451.3V454.0M805.5 449.9V453.5M806.5 450.7V458.0M807.5 422.1V456.9M808.5 382.7V422.1M809.5 350.2V382.7M810.5 333.1V352.6M811.5 316.4V333.1M812.5 311.1V318.3M813.5 302.6V311.1M814.5 295.6V304.0M815.5 291.2V296.3M816.5 289.3V296.1M817.5 289.7V296.1M818.5 288.6V295.6M819.5 288.6V293.5M820.5 283.5V290.6M821.5 281.6V284.6M822.5 277.8V284.0M823.5 281.0V285.3M824.5 282.7V285.3M825.5 280.7V285.0M826.5 283.9V288.2M827.5 279.5V284.5M828.5 276.5V284.5M829.5 272.5V281.5M830.5 278.1V282.3M831.5 278.2V282.8M832.5 279.6V284.2M833.5 278.8V282.6M834.5 278.8V283.0M835.5 279.8V283.6M836.5 280.0V284.5M837.5 281.5V284.5M838.5 279.3V284.1M839.5 278.6V282.8M840.5 277.1V283.2M841.5 278.5V284.0M842.5 280.0V286.0M843.5 280.1V283.8M844.5 279.6V286.5M845.5 281.9V287.2M846.5 280.5V284.3M847.5 278.0V284.3M848.5 278.4V284.1M849.5 280.3V286.1M850.5 280.0V286.2M851.5 280.4V286.8M852.5 282.0V285.1M853.5 280.7V287.7M854.5 280.2V283.7M855.5 280.1V285.3M856.5 280.7V288.4M857.5 281.4V285.6M858.5 280.5V283.5M859.5 282.9V285.6M860.5 276.8V288.0M861.5 280.6V288.0M862.5 283.3V288.0M863.5 279.0V285.0M864.5 280.7V285.8M865.5 283.3V288.2M866.5 282.2V288.2M867.5 283.2V287.2M868.5 280.7V285.8M869.5 279.4V287.5M870.5 280.6V290.7M871.5 280.3V284.0M872.5 280.5V303.8M873.5 303.8V338.9M874.5 338.9V365.0M875.5 365.0V383.7M876.5 383.7V398.7M877.5 398.7V411.7M878.5 408.7V422.0M879.5 422.0V429.2M880.5 428.0V437.1M881.5 434.6V442.5M882.5 440.1V445.1M883.5 441.7V445.9M884.5 443.5V447.5M885.5 442.4V445.2M886.5 441.2V444.8M887.5 444.4V451.9M888.5 451.2V455.5M889.5 450.8V454.5M890.5 451.2V455.8M891.5 454.4V457.4M892.5 452.5V455.8M893.5 446.6V454.1M894.5 450.9V456.7M895.5 452.3V457.5M896.5 452.8V459.5M897.5 452.9V458.1M898.5 450.7V454.1M899.5 450.0V453.9M900.5 449.2V454.7M901.5 452.1V455.5M902.5 452.3V456.1M903.5 453.6V457.5M904.5 450.9V457.5M905.5 449.2V453.5M906.5 452.2V456.1M907.5 453.9V459.0M908.5 453.2V457.2M909.5 452.4V457.2M910.5 452.3V457.5M911.5 447.7V457.0M912.5 450.2V458.7M913.5 455.5V459.5M914.5 456.0V459.8M915.5 454.3V460.1M916.5 454.2V457.8M917.5 450.9V455.9M918.5 450.9V454.6M919.5 450.6V457.4M920.5 451.7V457.4M921.5 450.3V455.0M922.5 452.0V459.9M923.5 451.9V456.2M924.5 451.5V458.5M925.5 452.2V456.9M926.5 453.6V457.6M927.5 455.2V458.1M928.5 453.9V457.4M929.5 452.3V457.4M930.5 452.1V456.8M931.5 451.8V455.6M932.5 451.6V455.2M933.5 452.2V456.4M934.5 452.2V457.5M935.5 452.2V457.0M936.5 453.3V457.5M937.5 447.3V456.4M938.5 447.3V450.2M939.5 449.4V454.8M940.5 451.4V454.4M941.5 453.1V457.6M942.5 449.2V456.6M943.5 451.6V456.8M944.5 452.1V462.3M945.5 451.8V458.2M946.5 450.9V456.7M947.5 450.7V454.4M948.5 449.6V457.7M949.5 452.6V455.3M950.5 452.7V457.3M951.5 453.6V459.2M952.5 448.3V459.2M953.5 450.0V457.8M954.5 451.2V457.8M955.5 450.2V454.1M956.5 453.4V457.6M957.5 452.7V457.3M958.5 452.9V455.9M959.5 450.6V455.5M960.5 450.1V454.7M961.5 447.7V454.0M962.5 450.7V455.0M963.5 451.7V454.7M964.5 452.8V455.6M965.5 450.4V456.1M966.5 452.6V456.1M967.5 452.0V456.1M968.5 450.6V455.9M969.5 451.9V455.5M970.5 451.5V458.1M971.5 453.5V460.9M972.5 452.2V456.8M973.5 452.1V455.2M974.5 450.0V455.2M975.5 453.2V455.5M976.5 451.9V457.3M977.5 451.7V454.7M978.5 450.0V454.2M979.5 449.0V454.6M980.5 449.4V459.7M981.5 448.2V455.1M982.5 439.3V448.2M983.5 445.6V463.9M984.5 462.6V471.1M985.5 451.1V462.6M986.5 447.8V451.1M987.5 451.0V455.4M988.5 450.9V457.6M989.5 452.7V457.6M990.5 450.3V456.1M991.5 451.4V456.6M992.5 450.1V455.2M993.5 448.7V453.5M994.5 447.3V455.6M995.5 450.3V456.2M996.5 453.1V456.9M997.5 450.3V454.3M998.5 451.8V457.9M999.5 452.2V456.4M1000.5 451.4V454.2M1001.5 449.2V454.5M1002.5 452.5V455.8M1003.5 451.3V460.1M1004.5 452.3V458.3M1005.5 451.5V455.5M1006.5 447.5V455.5M1007.5 451.7V453.4M1008.5 451.3V454.1M1009.5 451.4V454.6M1010.5 450.6V455.1M1011.5 453.2V456.9M1012.5 450.1V456.5M1013.5 451.8V455.0M1014.5 451.7V456.1M1015.5 450.3V457.0M1016.5 450.3V455.0M1017.5 451.7V456.5M1018.5 450.8V454.9M1019.5 451.8V457.1M1020.5 451.9V457.9M1021.5 454.6V457.6M1022.5 451.4V455.8M1023.5 451.0V457.4M1024.5 449.7V455.3M1025.5 448.4V454.2M1026.5 449.3V454.5M1027.5 451.3V454.5M1028.5 450.2V452.1M1029.5 443.5V454.4M1030.5 450.0V454.0M1031.5 451.7V456.9M1032.5 450.8V457.0M1033.5 450.8V456.0M1034.5 449.4V453.3M1035.5 446.9V455.7M1036.5 451.6V456.7M1037.5 451.6V457.8M1038.5 452.8V457.5M1039.5 454.1V457.5M1040.5 448.2V454.5M1041.5 450.9V455.4M1042.5 452.2V456.0M1043.5 451.0V457.8M1044.5 451.0V457.8M1045.5 452.6V457.4M1046.5 450.8V459.5M1047.5 450.8V454.6M1048.5 453.1V459.5M1049.5 451.8V459.5M1050.5 452.8V458.3M1051.5 451.6V457.5M1052.5 451.4V457.5M1053.5 450.5V456.8M1054.5 443.1V455.1M1055.5 452.3V457.1M1056.5 450.2V457.6M1057.5 450.2V455.3M1058.5 451.9V455.9M1059.5 451.9V456.4M1060.5 452.2V457.6M1061.5 454.6V457.6M1062.5 453.3V458.0M1063.5 454.0V458.3M1064.5 453.1V456.7M1065.5 450.8V456.9M1066.5 451.2V456.9M1067.5 449.9V454.7M1068.5 447.1V453.7M1069.5 438.3V453.9M1070.5 340.8V438.3M1071.5 278.7V340.8M1072.5 227.8V278.7M1073.5 202.4V227.8M1074.5 169.8V202.6M1075.5 161.4V178.4M1076.5 153.8V161.9M1077.5 137.0V153.8M1078.5 131.2V137.2M1079.5 127.8V138.2M1080.5 131.4V135.2M1081.5 129.4V135.6M1082.5 126.1V130.8M1083.5 118.6V127.0M1084.5 118.1V122.2M1085.5 119.8V123.3M1086.5 118.8V124.4M1087.5 118.3V122.3M1088.5 118.0V121.8M1089.5 116.9V121.2M1090.5 111.4V119.0M1091.5 111.4V117.3M1092.5 114.5V116.6M1093.5 112.4V116.5M1094.5 112.9V118.3M1095.5 112.1V116.7M1096.5 110.4V116.1M1097.5 110.5V115.5M1098.5 112.8V117.3M1099.5 113.3V117.5M1100.5 111.1V116.7M1101.5 111.0V113.2M1102.5 109.8V113.9M1103.5 111.5V114.5M1104.5 109.7V114.5M1105.5 107.4V118.1M1106.5 110.6V117.3M1107.5 112.3V116.7M1108.5 112.3V118.2M1109.5 113.4V119.0M1110.5 111.6V116.1M1111.5 112.4V119.8M1112.5 110.5V124.4M1113.5 110.1V114.1M1114.5 109.1V115.3M1115.5 110.1V115.3M1116.5 110.1V115.7M1117.5 111.2V115.6M1118.5 110.6V115.4M1119.5 110.5V113.9M1120.5 108.5V115.3M1121.5 112.2V116.7M1122.5 113.1V114.8M1123.5 110.9V115.2M1124.5 110.2V113.8M1125.5 109.2V113.5M1126.5 108.1V114.9M1127.5 110.0V115.4M1128.5 112.7V117.7M1129.5 112.2V117.4M1130.5 112.0V114.7M1131.5 113.2V116.9M1132.5 113.3V116.9M1133.5 112.0V117.3M1134.5 109.1V117.2M1135.5 112.8V116.3M1136.5 111.8V123.8M1137.5 112.8V116.6M1138.5 112.3V115.7M1139.5 111.0V115.1M1140.5 113.3V118.0M1141.5 113.2V117.7M1142.5 112.5V117.7M1143.5 112.9V118.2M1144.5 106.5V120.2M1145.5 116.0V120.2M1146.5 113.7V118.5M1147.5 115.1V119.1M1148.5 114.2V118.3M1149.5 114.5V121.5M1150.5 115.9V121.5M1151.5 115.1V121.7M1152.5 116.8V119.0M1153.5 114.4V120.9M1154.5 114.7V118.2M1155.5 114.2V118.6M1156.5 114.1V119.7M1157.5 117.5V161.9M1158.5 161.9V229.1M1159.5 229.1V281.4M1160.5 281.4V321.2M1161.5 321.2V348.1M1162.5 348.1V372.3M1163.5 372.3V391.5M1164.5 390.8V403.3M1165.5 403.3V416.3M1166.5 415.7V427.0M1167.5 426.8V437.0M1168.5 435.7V441.9M1169.5 437.4V441.6M1170.5 433.5V441.6M1171.5 433.0V436.8M1172.5 436.6V444.1M1173.5 442.3V449.1M1174.5 447.3V458.0M1175.5 453.9V459.0M1176.5 441.7V454.2M1177.5 445.9V451.7M1178.5 445.5V450.2M1179.5 445.0V449.9M1180.5 448.4V457.5M1181.5 452.0V457.9M1182.5 453.3V457.7M1183.5 450.4V454.7M1184.5 450.3V453.8M1185.5 447.5V452.0M1186.5 448.3V455.9M1187.5 448.3V454.4M1188.5 453.1V458.5M1189.5 452.3V460.5M1190.5 454.3V458.8M1191.5 453.0V459.3M1192.5 450.6V455.4M1193.5 450.9V453.5M1194.5 451.1V454.8M1195.5 449.3V457.3M1196.5 454.0V456.9M1197.5 451.8V455.7M1198.5 451.8V455.9M1199.5 452.3V455.9M1200.5 449.5V454.2M1201.5 449.7V453.5M1202.5 451.4V455.3M1203.5 453.4V456.0M1204.5 451.4V456.7M1205.5 450.2V456.4M1206.5 451.4V458.0M1207.5 451.4V456.2M1208.5 454.4V457.9M1209.5 451.5V456.8M1210.5 451.5V455.6M1211.5 450.1V453.8M1212.5 449.5V453.1M1213.5 452.7V456.6M1214.5 452.2V460.6M1215.5 451.2V456.3M1216.5 451.0V456.9M1217.5 454.5V457.7M1218.5 452.4V460.6M1219.5 449.7V452.6M1220.5 449.2V453.1M1221.5 446.8V452.9M1222.5 446.4V453.4M1223.5 446.4V456.1M1224.5 452.1V455.7M1225.5 449.7V453.1M1226.5 450.5V454.5M1227.5 452.2V456.0M1228.5 454.0V456.7M1229.5 454.2V457.6M1230.5 452.6V457.0M1231.5 452.6V458.7M1232.5 448.3V457.0M1233.5 451.5V457.4M1234.5 448.1V453.2M1235.5 448.6V453.1M1236.5 449.6V453.4M1237.5 452.0V459.6M1238.5 450.5V454.8M1239.5 452.8V456.1M1240.5 450.9V455.1M1241.5 449.0V453.9M1242.5 452.4V454.1M1243.5 449.2V457.6M1244.5 453.2V462.3M1245.5 451.1V462.3M1246.5 448.8V454.1M1247.5 451.8V455.1M1248.5 452.7V456.5M1249.5 451.1V458.5M1250.5 450.9V455.9M1251.5 450.2V455.2M1252.5 449.8V455.5M1253.5 451.8V454.7M1254.5 450.2V455.4M1255.5 452.3V456.4M1256.5 451.8V453.9M1257.5 449.9V457.4M1258.5 448.3V452.1M1259.5 448.3V452.0M1260.5 448.5V456.8M1261.5 449.8V454.2M1262.5 450.3V452.8M1263.5 451.7V454.2M1264.5 452.8V456.5M1265.5 452.4V457.5M1266.5 449.5V453.5M1267.5 447.5V454.6M1268.5 450.3V452.1M1269.5 448.8V452.8M1270.5 451.2V454.9M1271.5 450.0V455.6M1272.5 452.6V456.4M1273.5 450.9V456.6M1274.5 450.9V454.6M1275.5 450.4V455.9M1276.5 449.8V455.7M1277.5 447.8V452.2M1278.5 447.8V460.5M1279.5 450.3V455.6M1280.5 450.6V454.9M1281.5 450.6V454.0M1282.5 447.5V454.1M1283.5 448.6V456.8M1284.5 452.6V457.7M1285.5 450.2V454.3M1286.5 448.8V455.5M1287.5 450.0V456.1M1288.5 449.7V455.6M1289.5 452.8V455.0M1290.5 451.4V455.5M1291.5 449.9V455.9M1292.5 449.9V454.8M1293.5 452.1V456.0M1294.5 453.0V455.8M1295.5 448.4V453.1M1296.5 447.0V453.9M1297.5 449.7V453.9M1298.5 450.2V455.5M1299.5 451.8V455.5M1300.5 449.8V455.8M1301.5 450.2V454.7M1302.5 451.8V456.5M1303.5 444.2V456.4M1304.5 451.2V456.7M1305.5 451.7V457.2M1306.5 451.1V457.4M1307.5 453.1V456.4M1308.5 451.0V458.2M1309.5 451.6V455.7M1310.5 451.6V456.5M1311.5 450.1V455.4M1312.5 450.1V456.0M1313.5 453.5V459.4M1314.5 452.4V456.9M1315.5 451.5V458.6M1316.5 452.6V460.0M1317.5 452.2V458.1M1318.5 450.0V457.7M1319.5 450.5V455.9M1320.5 450.1V455.9M1321.5 446.4V455.3M1322.5 452.8V457.0M1323.5 452.0V456.9M1324.5 452.1V456.9M1325.5 452.1V455.6M1326.5 450.8V455.6M1327.5 454.0V457.5M1328.5 450.7V456.1M1329.5 449.8V456.1M1330.5 451.5V457.1M1331.5 453.0V460.4M1332.5 453.8V459.1M1333.5 451.7V456.6M1334.5 451.7V461.9M1335.5 452.8V461.9M1336.5 449.9V454.7M1337.5 449.9V456.8M1338.5 452.0V457.2M1339.5 454.1V459.4M1340.5 453.5V457.5M1341.5 448.2V455.6M1342.5 450.8V453.1M1343.5 449.3V455.3M1344.5 451.1V455.5M1345.5 451.0V454.9M1346.5 450.5V453.8M1347.5 450.0V455.0M1348.5 451.5V456.1M1349.5 453.8V456.1M1350.5 453.1V457.1M1351.5 453.1V456.5M1352.5 449.6V456.1M1353.5 450.8V455.7M1354.5 451.0V456.3M1355.5 450.6V454.5M1356.5 448.9V454.4M1357.5 444.3V455.1M1358.5 444.3V456.1M1359.5 447.9V458.1M1360.5 452.2V456.2M1361.5 449.7V456.5M1362.5 451.5V456.2M1363.5 452.0V456.7M1364.5 452.4V456.0M1365.5 451.3V456.1M1366.5 452.2V457.2M1367.5 451.1V454.4M1368.5 452.1V454.8M1369.5 451.7V457.9M1370.5 451.7V457.9M1371.5 450.5V455.7M1372.5 453.5V456.4M1373.5 452.3V458.1M1374.5 451.6V456.7M1375.5 451.6V456.1M1376.5 452.6V459.4M1377.5 453.8V458.7M1378.5 453.8V458.2M1379.5 451.1V456.2M1380.5 452.0V457.1M1381.5 450.6V453.2M1382.5 450.1V462.9M1383.5 450.6V462.9M1384.5 449.7V457.1M1385.5 449.7V454.4M1386.5 451.6V457.6M1387.5 450.3V454.2M1388.5 449.0V453.7M1389.5 448.9V459.4M1390.5 451.4V457.5M1391.5 453.3V456.6M1392.5 453.1V457.7M1393.5 452.2V454.9M1394.5 450.6V455.0M1395.5 449.8V453.9M1396.5 448.9V453.6M1397.5 452.8V454.7M1398.5 448.0V453.8M1399.5 447.8V455.8M1400.5 450.3V455.1M1401.5 450.9V454.9M1402.5 451.6V455.3M1403.5 452.9V459.8M1404.5 452.4V457.7M1405.5 448.9V455.2M1406.5 448.9V452.9M1407.5 451.0V456.9M1408.5 453.0V456.5M1409.5 452.3V456.8M1410.5 450.3V453.8M1411.5 450.6V453.8M1412.5 448.8V454.0M1413.5 450.9V454.1M1414.5 451.6V457.4M1415.5 454.1V459.1M1416.5 451.1V457.7M1417.5 449.9V453.8M1418.5 450.9V456.7M1419.5 450.9V454.4M1420.5 450.0V454.9M1421.5 449.0V453.8M1422.5 449.3V454.5M1423.5 450.4V454.2M1424.5 452.4V456.4M1425.5 450.0V456.4M1426.5 446.0V459.1M1427.5 453.0V463.9M1428.5 451.7V460.5M1429.5 452.2V456.4M1430.5 452.2V459.6M1431.5 448.1V459.0M1432.5 452.4V459.0M1433.5 455.9V460.4M1434.5 452.9V458.0M1435.5 451.9V457.1M1436.5 452.1V463.1M1437.5 450.7V455.3M1438.5 451.0V453.4M1439.5 448.7V453.3M1440.5 450.8V456.7M1441.5 452.6V455.2M1442.5 450.5V454.5M1443.5 449.2V455.4M1444.5 450.4V454.3M1445.5 449.8V454.6M1446.5 452.1V463.2M1447.5 453.0V456.1M1448.5 448.7V454.8M1449.5 447.4V452.9M1450.5 451.9V456.5M1451.5 450.4V455.6M1452.5 449.1V455.4M1453.5 448.4V456.8M1454.5 450.4V454.3M1455.5 449.1V453.3M1456.5 448.9V454.1M1457.5 451.1V456.7M1458.5 451.4V457.7M1459.5 452.0V454.1M1460.5 452.3V457.3M1461.5 452.3V455.7M1462.5 450.9V456.2M1463.5 449.9V455.3M1464.5 444.7V456.2M1465.5 451.0V457.9M1466.5 451.0V456.2M1467.5 448.7V456.2M1468.5 452.0V456.4M1469.5 451.3V457.3M1470.5 452.2V457.4M1471.5 452.0V458.1M1472.5 452.9V458.0M1473.5 453.9V457.4M1474.5 453.1V457.6M1475.5 455.1V458.2M1476.5 452.5V458.2M1477.5 452.5V457.0M1478.5 451.1V457.9M1479.5 451.7V454.5M1480.5 451.7V458.5M1481.5 452.1V455.8M1482.5 452.1V456.9M1483.5 453.9V457.9M1484.5 452.9V456.8M1485.5 452.8V457.2M1486.5 455.3V458.7M1487.5 456.3V460.0M1488.5 454.5V458.5M1489.5 453.2V458.5M1490.5 452.2V458.1M1491.5 452.3V456.0M1492.5 449.5V454.7M1493.5 450.9V458.3M1494.5 451.8V458.3M1495.5 453.5V458.4M1496.5 453.5V459.2M1497.5 451.0V456.7M1498.5 451.0V456.1M1499.5 453.5V459.1M1500.5 453.6V456.6M1501.5 452.7V455.9M1502.5 451.1V455.5M1503.5 450.4V453.5M1504.5 453.2V459.1M1505.5 454.3V457.0M1506.5 453.6V457.4M1507.5 453.1V456.8M1508.5 452.3V457.7M1509.5 453.3V456.3M1510.5 452.9V457.6M1511.5 450.9V456.3M1512.5 451.0V454.5M1513.5 451.4V453.6M1514.5 451.9V455.5M1515.5 452.6V456.6M1516.5 450.7V456.1M1517.5 447.7V455.5M1518.5 448.1V454.7M1519.5 448.1V453.5M1520.5 450.1V455.4M1521.5 450.2V459.7M1522.5 448.7V454.3M1523.5 451.6V454.2M1524.5 451.4V456.8M1525.5 448.6V453.4M1526.5 449.5V453.5M1527.5 450.2V455.0M1528.5 450.2V457.7M1529.5 452.9V457.7M1530.5 448.8V454.6M1531.5 450.5V454.3M1532.5 450.5V455.9M1533.5 450.3V454.8M1534.5 450.8V454.8M1535.5 453.0V457.4M1536.5 452.5V455.5M1537.5 453.9V460.1M1538.5 453.6V457.8M1539.5 454.8V457.6M1540.5 453.8V456.9M1541.5 452.7V456.5M1542.5 451.0V454.9M1543.5 451.8V456.7M1544.5 453.3V456.3M1545.5 451.7V455.5M1546.5 452.3V456.2M1547.5 452.4V456.7M1548.5 451.6V455.7M1549.5 449.3V455.1M1550.5 447.8V453.5M1551.5 451.0V458.4M1552.5 453.6V458.1M1553.5 451.3V454.5M1554.5 451.8V456.8M1555.5 451.8V457.1M1556.5 452.1V457.6M1557.5 452.0V456.6M1558.5 449.2V454.7M1559.5 452.8V456.2M1560.5 446.4V456.2M1561.5 446.4V454.7M1562.5 450.2V455.8M1563.5 452.6V456.5M1564.5 452.6V457.4M1565.5 453.8V456.4M1566.5 453.5V458.7M1567.5 450.9V458.1M1568.5 452.2V456.4M1569.5 449.2V455.9M1570.5 451.5V455.0M1571.5 450.2V458.3M1572.5 449.6V453.6M1573.5 449.6V453.1M1574.5 451.3V455.6M1575.5 451.0V455.9M1576.5 451.3V456.4M1577.5 451.0V455.3M1578.5 451.0V462.8M1579.5 452.3V457.2M1580.5 451.2V455.1M1581.5 447.6V456.1M1582.5 451.9V456.1M1583.5 450.8V455.2M1584.5 442.9V455.7M1585.5 451.4V455.7M1586.5 450.0V456.3M1587.5 450.3V456.2M1588.5 452.5V458.0M1589.5 451.8V455.7M1590.5 453.4V458.0M1591.5 453.8V457.7M1592.5 453.4V458.9M1593.5 452.0V456.9M1594.5 449.2V455.1M1595.5 448.9V453.8M1596.5 451.4V455.2M1597.5 450.7V455.8M1598.5 451.5V455.8M1599.5 450.8V456.4M1600.5 450.8V454.2M1601.5 453.6V455.3M1602.5 452.8V457.7M1603.5 452.8V456.9M1604.5 454.2V460.9M1605.5 451.5V456.7M1606.5 453.3V458.6M1607.5 455.5V458.7M1608.5 450.2V456.6M1609.5 453.0V458.4M1610.5 452.4V460.0M1611.5 452.1V456.2M1612.5 452.1V456.9M1613.5 451.9V463.1M1614.5 449.1V453.8M1615.5 448.2V452.9M1616.5 450.0V453.8M1617.5 451.8V454.2M1618.5 451.8V457.2M1619.5 453.5V458.3M1620.5 452.4V455.5M1621.5 452.8V456.6M1622.5 450.7V455.3M1623.5 450.3V454.2M1624.5 450.0V454.6M1625.5 451.3V456.6M1626.5 450.2V454.2M1627.5 450.2V455.6M1628.5 449.7V455.6M1629.5 453.0V457.2M1630.5 451.7V457.4M1631.5 452.0V457.4M1632.5 450.6V455.0M1633.5 450.9V456.8M1634.5 450.7V453.5M1635.5 450.6V458.3M1636.5 444.5V456.2M1637.5 444.5V454.8M1638.5 449.8V454.9M1639.5 449.3V454.0M1640.5 449.4V455.2M1641.5 448.5V455.2M1642.5 450.2V454.4M1643.5 452.0V458.0M1644.5 453.6V458.0M1645.5 450.0V458.2M1646.5 450.0V455.2M1647.5 449.9V454.6M1648.5 451.4V454.6M1649.5 449.0V453.9M1650.5 451.1V458.6M1651.5 449.6V455.1M1652.5 450.2V453.5M1653.5 451.3V456.5M1654.5 449.1V455.1M1655.5 449.9V456.3M1656.5 449.9V456.7M1657.5 455.1V457.3M1658.5 452.8V457.2M1659.5 452.5V459.2M1660.5 453.6V459.4M1661.5 451.4V456.6M1662.5 449.7V455.9M1663.5 452.6V457.2M1664.5 453.0V457.2M1665.5 454.0V456.5M1666.5 453.2V458.4M1667.5 450.6V456.4M1668.5 449.5V455.2M1669.5 453.0V457.2M1670.5 454.6V457.1M1671.5 452.3V457.5M1672.5 451.1V455.6M1673.5 450.9V455.6M1674.5 451.5V454.2M1675.5 450.8V455.5M1676.5 451.6V455.5M1677.5 452.1V458.1M1678.5 453.3V457.1M1679.5 454.2V457.4M1680.5 451.1V455.5M1681.5 451.1V456.2M1682.5 451.2V455.7M1683.5 450.6V453.3M1684.5 446.0V460.1M1685.5 449.6V456.5M1686.5 449.6V454.7M1687.5 452.8V454.9M1688.5 452.8V458.6M1689.5 445.7V455.0M1690.5 452.1V454.9M1691.5 452.0V454.7M1692.5 449.1V454.2M1693.5 449.4V453.8M1694.5 451.1V456.1M1695.5 453.2V456.4M1696.5 449.8V454.6M1697.5 449.8V454.1M1698.5 450.9V452.6M1699.5 451.7V454.6M1700.5 447.3V459.4M1701.5 452.8V457.4M1702.5 450.1V456.1M1703.5 449.3V453.6M1704.5 450.1V453.9M1705.5 451.7V454.7M1706.5 453.1V458.3M1707.5 454.4V458.3M1708.5 452.7V459.3M1709.5 448.7V455.6M1710.5 450.7V455.6M1711.5 449.7V456.5M1712.5 452.7V456.5M1713.5 453.6V458.4M1714.5 449.2V459.0M1715.5 451.1V455.1M1716.5 453.2V455.5M1717.5 452.7V455.8M1718.5 450.2V458.1M1719.5 450.3V458.1M1720.5 449.3V453.7M1721.5 449.8V453.0M1722.5 449.7V453.5M1723.5 449.7V453.5M1724.5 448.4V452.7M1725.5 451.1V455.2M1726.5 452.3V455.6M1727.5 451.6V454.9M1728.5 452.3V454.9M1729.5 451.9V454.0M1730.5 451.6V454.3M1731.5 452.3V464.8M1732.5 451.1V453.9M1733.5 451.8V455.3M1734.5 452.3V456.5M1735.5 448.3V457.1M1736.5 451.2V456.4M1737.5 450.7V455.3M1738.5 451.2V455.4M1739.5 451.2V456.1M1740.5 451.8V458.1M1741.5 453.1V457.7M1742.5 452.6V456.2M1743.5 454.4V459.6M1744.5 449.8V459.6M1745.5 450.8V455.1M1746.5 452.6V457.1M1747.5 451.8V456.4M1748.5 451.7V457.6M1749.5 452.1V457.9M1750.5 452.2V456.8"/><path fill="none" stroke="#1fc0c8" stroke-width="1.45" d="M3.5 877.9V882.0M4.5 877.9V880.6M5.5 877.1V880.8M6.5 879.8V881.6M7.5 876.6V881.6M8.5 878.3V880.1M9.5 877.9V881.5M10.5 878.7V881.5M11.5 879.4V882.8M12.5 878.0V880.8M13.5 877.0V883.3M14.5 877.7V881.3M15.5 876.5V880.6M16.5 876.9V880.1M17.5 876.2V881.5M18.5 877.6V881.5M19.5 875.4V879.3M20.5 876.2V880.8M21.5 874.6V880.8M22.5 876.1V881.0M23.5 875.6V881.6M24.5 877.2V881.2M25.5 876.9V881.1M26.5 877.0V881.0M27.5 877.3V881.0M28.5 877.6V881.1M29.5 876.4V882.2M30.5 876.4V883.4M31.5 877.0V881.4M32.5 877.0V880.6M33.5 878.0V882.4M34.5 877.0V882.5M35.5 877.9V880.0M36.5 876.6V880.3M37.5 876.4V880.2M38.5 877.7V880.2M39.5 875.3V879.7M40.5 876.7V881.6M41.5 876.7V881.8M42.5 877.6V881.2M43.5 877.4V881.2M44.5 878.9V880.9M45.5 878.9V881.0M46.5 877.4V880.0M47.5 878.1V883.2M48.5 878.0V881.6M49.5 877.5V881.8M50.5 877.7V882.4M51.5 878.5V882.4M52.5 879.8V881.4M53.5 878.8V880.4M54.5 878.3V881.2M55.5 878.0V881.6M56.5 878.5V882.1M57.5 877.4V883.4M58.5 875.7V879.2M59.5 876.2V881.4M60.5 876.8V880.5M61.5 877.6V881.4M62.5 877.4V880.8M63.5 877.2V881.5M64.5 877.2V881.1M65.5 874.7V880.2M66.5 875.9V879.4M67.5 877.1V881.2M68.5 878.5V880.0M69.5 878.0V881.4M70.5 876.8V883.6M71.5 876.9V880.0M72.5 878.5V886.1M73.5 878.2V886.1M74.5 878.2V885.6M75.5 877.5V882.5M76.5 878.0V882.5M77.5 872.2V880.9M78.5 875.1V880.0M79.5 877.4V879.9M80.5 874.2V880.0M81.5 877.5V881.1M82.5 877.6V881.8M83.5 877.7V881.5M84.5 876.8V881.5M85.5 877.8V879.7M86.5 876.8V880.7M87.5 877.9V882.0M88.5 878.0V883.5M89.5 877.3V881.5M90.5 876.8V882.3M91.5 877.4V882.5M92.5 877.9V882.5M93.5 879.4V882.5M94.5 878.3V882.2M95.5 879.4V884.1M96.5 874.1V881.4M97.5 878.8V881.9M98.5 878.2V882.4M99.5 872.9V880.6M100.5 878.5V880.3M101.5 876.8V882.4M102.5 878.8V883.5M103.5 876.6V881.4M104.5 878.6V881.9M105.5 876.4V879.5M106.5 877.2V882.4M107.5 877.0V880.1M108.5 876.5V881.0M109.5 877.1V881.3M110.5 877.3V880.6M111.5 879.0V882.8M112.5 878.7V881.8M113.5 878.9V882.5M114.5 877.7V882.2M115.5 877.4V880.2M116.5 876.8V882.1M117.5 876.6V880.6M118.5 876.6V880.0M119.5 876.7V879.9M120.5 878.5V880.8M121.5 878.0V882.2M122.5 877.8V882.8M123.5 877.8V883.2M124.5 878.3V884.3M125.5 880.1V884.8M126.5 878.4V883.6M127.5 877.7V882.6M128.5 875.4V881.2M129.5 877.3V881.5M130.5 878.0V880.9M131.5 878.8V885.6M132.5 878.7V882.0M133.5 877.9V881.1M134.5 877.1V880.8M135.5 877.5V881.5M136.5 878.3V882.4M137.5 877.5V881.2M138.5 876.1V881.2M139.5 878.6V884.8M140.5 877.6V884.8M141.5 877.6V881.7M142.5 878.2V881.2M143.5 876.7V880.3M144.5 877.2V880.9M145.5 877.5V882.2M146.5 876.6V880.7M147.5 876.8V882.2M148.5 876.9V880.7M149.5 876.1V880.8M150.5 877.4V881.9M151.5 877.1V880.0M152.5 878.1V887.2M153.5 878.6V882.4M154.5 878.4V881.7M155.5 877.0V880.6M156.5 877.0V879.8M157.5 878.1V881.7M158.5 875.3V879.2M159.5 876.8V880.3M160.5 876.8V881.8M161.5 878.7V882.1M162.5 878.3V882.1M163.5 877.5V883.4M164.5 877.6V882.3M165.5 877.6V880.3M166.5 879.1V883.5M167.5 875.6V881.8M168.5 876.2V879.8M169.5 876.2V881.1M170.5 876.1V880.2M171.5 877.1V881.4M172.5 876.6V882.1M173.5 876.2V881.7M174.5 878.2V882.3M175.5 878.1V881.8M176.5 880.2V882.4M177.5 878.0V882.5M178.5 877.1V880.9M179.5 878.4V883.1M180.5 877.6V881.8M181.5 877.4V880.7M182.5 876.4V879.7M183.5 876.5V880.1M184.5 875.3V879.0M185.5 876.8V880.4M186.5 876.3V883.2M187.5 877.1V880.2M188.5 879.4V882.3M189.5 876.6V884.3M190.5 875.4V881.7M191.5 878.1V882.1M192.5 877.0V881.5M193.5 878.7V881.3M194.5 877.8V881.6M195.5 877.5V881.2M196.5 876.9V881.0M197.5 878.5V880.0M198.5 876.1V881.6M199.5 876.7V881.3M200.5 876.7V881.5M201.5 877.1V880.6M202.5 876.8V880.3M203.5 876.8V880.3M204.5 876.1V879.9M205.5 877.9V882.4M206.5 878.3V880.7M207.5 877.0V879.5M208.5 877.0V881.3M209.5 877.5V881.3M210.5 878.5V880.4M211.5 876.7V881.7M212.5 877.7V881.7M213.5 876.8V880.9M214.5 876.3V881.2M215.5 878.8V881.2M216.5 878.2V881.5M217.5 877.3V883.5M218.5 876.3V879.9M219.5 878.1V882.6M220.5 877.5V882.0M221.5 877.8V880.9M222.5 877.8V881.3M223.5 878.4V881.3M224.5 877.6V881.9M225.5 877.6V880.7M226.5 877.4V881.8M227.5 877.7V882.0M228.5 878.9V883.5M229.5 879.6V883.1M230.5 877.8V880.6M231.5 877.3V885.0M232.5 877.7V883.1M233.5 877.9V882.1M234.5 878.1V882.1M235.5 876.8V881.7M236.5 877.7V880.1M237.5 877.9V882.2M238.5 878.5V882.2M239.5 872.9V882.4M240.5 877.6V882.5M241.5 877.4V880.8M242.5 878.0V880.3M243.5 875.5V880.5M244.5 876.4V880.5M245.5 877.0V881.7M246.5 878.8V881.8M247.5 878.4V880.7M248.5 878.4V882.9M249.5 877.4V882.0M250.5 877.3V881.5M251.5 877.7V880.4M252.5 876.8V880.3M253.5 877.4V881.0M254.5 871.0V880.6M255.5 877.2V879.2M256.5 876.1V878.2M257.5 878.1V880.8M258.5 877.0V878.9M259.5 876.7V881.2M260.5 878.5V887.0M261.5 877.3V880.1M262.5 877.2V880.0M263.5 876.6V878.7M264.5 876.5V880.0M265.5 877.4V884.7M266.5 877.6V880.6M267.5 878.4V882.9M268.5 879.0V881.5M269.5 878.8V881.0M270.5 874.6V881.1M271.5 876.9V883.7M272.5 875.9V880.4M273.5 874.6V880.6M274.5 874.6V882.6M275.5 877.2V882.6M276.5 880.6V882.9M277.5 877.5V881.9M278.5 876.8V881.9M279.5 878.9V881.0M280.5 876.2V878.9M281.5 878.1V881.5M282.5 876.4V880.4M283.5 878.1V881.4M284.5 878.6V881.2M285.5 879.2V880.7M286.5 877.6V882.0M287.5 878.6V881.9M288.5 878.9V882.8M289.5 877.9V881.1M290.5 877.1V880.2M291.5 877.1V881.5M292.5 876.4V880.7M293.5 875.8V880.8M294.5 874.2V879.0M295.5 876.2V879.3M296.5 876.2V880.9M297.5 876.4V880.9M298.5 878.2V881.9M299.5 878.2V882.8M300.5 878.1V881.7M301.5 878.6V883.0M302.5 876.6V881.6M303.5 878.7V881.0M304.5 878.7V884.0M305.5 880.0V883.0M306.5 877.5V881.3M307.5 876.0V880.3M308.5 876.0V881.7M309.5 877.2V880.0M310.5 876.5V880.3M311.5 877.5V882.2M312.5 878.2V881.0M313.5 878.2V882.4M314.5 877.6V882.8M315.5 878.2V883.8M316.5 877.9V883.8M317.5 877.9V883.0M318.5 878.2V882.5M319.5 878.9V883.5M320.5 875.7V881.8M321.5 877.9V881.3M322.5 878.3V881.2M323.5 876.9V881.1M324.5 877.8V882.8M325.5 874.2V881.5M326.5 877.7V881.5M327.5 877.8V881.9M328.5 877.6V880.4M329.5 877.5V880.2M330.5 876.9V881.7M331.5 877.9V882.2M332.5 878.5V881.8M333.5 878.8V882.7M334.5 877.3V880.5M335.5 877.4V881.9M336.5 878.9V882.3M337.5 879.2V882.2M338.5 878.3V881.1M339.5 877.6V880.4M340.5 876.2V880.4M341.5 873.7V880.6M342.5 876.5V880.1M343.5 875.8V884.0M344.5 878.5V884.0M345.5 876.0V879.8M346.5 876.7V882.8M347.5 878.3V885.0M348.5 877.6V882.1M349.5 878.6V883.2M350.5 877.1V883.2M351.5 876.2V880.2M352.5 878.5V882.0M353.5 878.8V882.0M354.5 877.8V882.0M355.5 875.8V878.4M356.5 875.4V879.8M357.5 877.6V880.4M358.5 876.8V880.5M359.5 877.3V881.5M360.5 876.4V879.6M361.5 877.8V880.6M362.5 878.9V882.1M363.5 878.9V881.5M364.5 878.8V883.2M365.5 878.8V882.7M366.5 878.2V883.2M367.5 878.5V882.9M368.5 877.5V881.2M369.5 877.6V880.4M370.5 878.6V881.6M371.5 878.1V882.2M372.5 877.5V881.7M373.5 877.5V881.1M374.5 877.8V881.5M375.5 879.4V881.5M376.5 878.6V882.5M377.5 878.4V881.5M378.5 877.8V881.5M379.5 878.1V882.0M380.5 877.7V881.6M381.5 877.7V881.6M382.5 879.2V883.0M383.5 876.1V883.0M384.5 877.9V881.9M385.5 879.8V881.5M386.5 876.1V880.3M387.5 876.9V886.8M388.5 877.1V886.8M389.5 877.4V881.3M390.5 877.8V882.7M391.5 878.8V882.7M392.5 878.7V882.3M393.5 874.2V881.1M394.5 877.3V881.7M395.5 876.4V884.0M396.5 875.9V880.9M397.5 876.8V881.2M398.5 876.6V880.4M399.5 877.1V879.6M400.5 876.0V880.8M401.5 876.0V881.7M402.5 877.5V880.6M403.5 878.1V881.7M404.5 876.1V881.7M405.5 877.1V881.6M406.5 876.3V880.3M407.5 876.2V879.7M408.5 875.8V879.5M409.5 871.5V880.7M410.5 876.9V880.0M411.5 873.3V881.4M412.5 877.3V881.5M413.5 878.9V882.8M414.5 879.8V883.5M415.5 878.7V881.3M416.5 878.6V882.6M417.5 876.9V880.8M418.5 877.3V880.5M419.5 878.2V881.3M420.5 876.8V881.8M421.5 878.4V883.1M422.5 877.9V881.4M423.5 878.7V881.8M424.5 878.2V880.5M425.5 876.3V880.5M426.5 876.7V886.9M427.5 876.8V880.7M428.5 877.0V880.1M429.5 877.1V880.2M430.5 877.1V882.7M431.5 874.7V885.0M432.5 879.0V883.5M433.5 880.1V883.1M434.5 879.8V883.1M435.5 880.3V883.1M436.5 878.6V881.9M437.5 880.2V882.9M438.5 877.7V882.6M439.5 877.4V882.6M440.5 878.0V880.2M441.5 875.8V880.8M442.5 875.8V881.2M443.5 875.9V880.7M444.5 876.4V879.4M445.5 876.4V880.2M446.5 876.8V882.0M447.5 877.1V882.0M448.5 879.4V882.2M449.5 878.3V881.3M450.5 878.9V881.2M451.5 877.1V883.3M452.5 877.2V881.4M453.5 878.4V882.6M454.5 876.5V879.0M455.5 876.6V881.0M456.5 876.3V880.1M457.5 876.1V881.9M458.5 876.9V881.6M459.5 876.9V881.6M460.5 878.5V883.3M461.5 876.6V881.1M462.5 877.6V880.3M463.5 877.6V879.6M464.5 877.6V883.3M465.5 876.2V883.3M466.5 876.2V879.5M467.5 878.4V881.5M468.5 876.9V882.8M469.5 875.1V880.6M470.5 878.3V880.9M471.5 877.5V881.3M472.5 877.6V882.2M473.5 878.1V882.2M474.5 878.1V881.8M475.5 876.0V881.0M476.5 877.9V881.3M477.5 878.2V881.4M478.5 878.5V881.7M479.5 877.5V881.7M480.5 877.0V880.7M481.5 876.7V879.5M482.5 875.3V879.5M483.5 876.2V879.4M484.5 879.2V881.1M485.5 876.6V881.6M486.5 877.2V881.4M487.5 876.7V880.9M488.5 876.7V880.8M489.5 878.4V882.6M490.5 878.2V881.2M491.5 878.5V882.2M492.5 877.3V879.5M493.5 878.1V881.3M494.5 877.5V880.1M495.5 876.7V880.0M496.5 876.7V880.7M497.5 877.9V882.4M498.5 877.6V881.6M499.5 879.8V882.9M500.5 877.6V881.9M501.5 877.6V883.1M502.5 878.8V882.4M503.5 878.8V882.7M504.5 878.8V883.7M505.5 877.9V886.0M506.5 877.0V882.5M507.5 877.3V881.4M508.5 876.8V883.1M509.5 878.1V881.5M510.5 878.1V881.2M511.5 876.3V881.2M512.5 878.3V881.7M513.5 879.6V882.7M514.5 875.4V882.7M515.5 878.1V881.1M516.5 878.7V881.4M517.5 878.3V882.2M518.5 878.9V881.8M519.5 875.0V880.8M520.5 879.0V883.1M521.5 878.3V882.0M522.5 877.6V881.7M523.5 877.9V883.1M524.5 876.3V882.0M525.5 878.6V882.8M526.5 877.3V882.6M527.5 878.7V880.7M528.5 877.9V882.0M529.5 877.8V882.4M530.5 878.6V882.4M531.5 878.9V880.7M532.5 878.1V882.7M533.5 876.0V880.8M534.5 877.4V880.7M535.5 877.1V882.1M536.5 873.0V883.1M537.5 877.8V882.3M538.5 877.4V881.2M539.5 879.5V885.0M540.5 878.9V882.4M541.5 876.6V880.8M542.5 877.4V880.3M543.5 876.9V880.2M544.5 876.7V880.2M545.5 876.7V880.0M546.5 878.5V881.8M547.5 877.1V880.7M548.5 876.4V881.3M549.5 877.4V881.0M550.5 877.2V881.0M551.5 876.6V882.9M552.5 875.3V882.6M553.5 875.3V880.3M554.5 873.2V879.7M555.5 876.6V881.5M556.5 875.9V880.7M557.5 877.6V880.9M558.5 877.0V881.3M559.5 877.2V881.0M560.5 879.2V882.4M561.5 877.2V882.7M562.5 877.2V880.8M563.5 874.3V880.8M564.5 877.1V880.3M565.5 877.7V882.8M566.5 879.3V882.8M567.5 877.3V881.1M568.5 876.5V880.8M569.5 876.5V880.3M570.5 876.1V878.5M571.5 876.1V887.7M572.5 878.6V887.7M573.5 878.0V881.9M574.5 877.5V880.7M575.5 877.0V881.4M576.5 876.4V880.4M577.5 873.6V881.0M578.5 877.9V881.4M579.5 876.7V881.0M580.5 878.8V881.0M581.5 876.0V880.4M582.5 875.7V880.0M583.5 875.5V881.1M584.5 875.5V879.8M585.5 877.5V880.2M586.5 877.4V881.0M587.5 878.4V883.2M588.5 876.8V883.2M589.5 877.8V882.0M590.5 878.2V881.0M591.5 877.7V881.1M592.5 877.7V880.1M593.5 877.7V880.0M594.5 877.8V880.1M595.5 875.6V880.7M596.5 876.3V880.8M597.5 876.5V879.2M598.5 874.0V882.0M599.5 877.5V882.0M600.5 877.2V883.0M601.5 877.9V880.4M602.5 877.9V882.2M603.5 878.4V882.2M604.5 878.7V881.9M605.5 879.5V883.1M606.5 878.5V882.0M607.5 877.2V880.8M608.5 877.2V880.8M609.5 878.8V881.7M610.5 878.9V885.4M611.5 877.7V880.7M612.5 877.4V880.3M613.5 877.5V882.2M614.5 877.3V880.8M615.5 877.7V881.1M616.5 878.3V882.7M617.5 879.2V882.6M618.5 876.8V880.8M619.5 877.5V880.8M620.5 876.7V880.8M621.5 877.1V882.0M622.5 876.6V880.4M623.5 878.1V881.7M624.5 878.4V881.5M625.5 876.3V882.9M626.5 877.9V882.1M627.5 876.8V882.2M628.5 878.3V881.0M629.5 879.7V883.5M630.5 878.9V885.2M631.5 879.1V885.0M632.5 864.7V882.4M633.5 773.9V864.7M634.5 721.0V773.9M635.5 685.8V721.0M636.5 661.0V685.8M637.5 643.1V661.0M638.5 637.0V645.3M639.5 628.7V637.7M640.5 620.6V628.7M641.5 615.4V621.5M642.5 615.3V618.7M643.5 615.2V620.6M644.5 614.2V618.9M645.5 610.1V614.7M646.5 607.2V612.4M647.5 606.7V610.1M648.5 605.8V608.7M649.5 607.1V609.6M650.5 607.7V609.8M651.5 606.6V609.8M652.5 606.3V609.9M653.5 604.0V609.7M654.5 604.6V610.3M655.5 604.5V608.2M656.5 604.5V608.7M657.5 604.9V608.6M658.5 604.6V608.4M659.5 604.2V608.7M660.5 603.2V607.2M661.5 603.6V609.6M662.5 605.5V608.4M663.5 605.3V608.0M664.5 603.0V608.0M665.5 602.4V606.6M666.5 601.8V607.8M667.5 604.8V607.8M668.5 605.1V608.5M669.5 605.6V609.6M670.5 605.0V608.4M671.5 599.7V608.2M672.5 602.1V606.9M673.5 601.9V604.9M674.5 600.2V605.6M675.5 602.3V605.5M676.5 602.4V606.9M677.5 603.2V607.9M678.5 602.8V606.5M679.5 603.7V606.7M680.5 602.8V606.7M681.5 603.1V606.7M682.5 602.8V606.8M683.5 603.3V607.0M684.5 603.3V607.4M685.5 603.6V607.3M686.5 604.1V608.3M687.5 603.0V606.5M688.5 602.0V607.0M689.5 603.8V606.9M690.5 603.9V607.7M691.5 602.7V607.2M692.5 601.2V606.3M693.5 603.1V606.7M694.5 602.4V605.3M695.5 602.4V607.2M696.5 602.7V605.4M697.5 603.6V606.3M698.5 604.3V608.5M699.5 600.9V608.7M700.5 600.9V605.9M701.5 603.9V607.4M702.5 603.5V607.0M703.5 602.6V606.8M704.5 600.1V606.4M705.5 603.6V607.1M706.5 599.9V605.6M707.5 601.8V606.5M708.5 603.2V608.0M709.5 601.9V606.1M710.5 603.6V606.1M711.5 602.8V605.8M712.5 603.1V606.4M713.5 603.5V606.9M714.5 601.1V605.3M715.5 601.1V608.0M716.5 602.8V608.2M717.5 601.1V605.6M718.5 601.1V605.5M719.5 603.2V614.4M720.5 614.4V677.1M721.5 677.1V722.3M722.5 722.3V757.0M723.5 757.0V784.3M724.5 784.3V805.1M725.5 805.1V822.7M726.5 822.7V837.1M727.5 837.1V843.6M728.5 843.6V854.4M729.5 854.4V862.3M730.5 862.3V867.2M731.5 865.3V869.4M732.5 864.7V869.1M733.5 865.5V869.4M734.5 867.3V871.8M735.5 871.8V877.0M736.5 873.5V878.9M737.5 876.4V878.6M738.5 876.0V878.3M739.5 874.8V878.5M740.5 872.5V878.0M741.5 873.8V878.3M742.5 876.8V878.8M743.5 875.7V880.8M744.5 877.5V882.7M745.5 877.4V882.7M746.5 875.8V879.6M747.5 876.2V878.7M748.5 876.0V880.9M749.5 876.0V880.1M750.5 876.5V881.3M751.5 878.1V881.3M752.5 879.0V882.2M753.5 878.1V882.0M754.5 879.9V882.8M755.5 876.2V880.6M756.5 875.4V879.4M757.5 875.2V879.5M758.5 875.2V881.4M759.5 877.3V880.5M760.5 877.3V883.1M761.5 876.5V880.4M762.5 875.6V880.7M763.5 877.7V882.1M764.5 878.9V882.4M765.5 879.6V883.7M766.5 877.5V883.2M767.5 877.5V880.5M768.5 876.5V880.5M769.5 877.3V879.9M770.5 876.1V880.6M771.5 876.1V880.8M772.5 875.7V880.1M773.5 878.0V880.4M774.5 876.6V881.3M775.5 877.6V880.8M776.5 876.2V880.7M777.5 878.4V882.1M778.5 878.9V881.6M779.5 876.5V881.6M780.5 877.7V882.5M781.5 873.9V881.2M782.5 876.9V884.4M783.5 878.1V880.9M784.5 876.0V880.1M785.5 874.9V880.5M786.5 873.8V880.7M787.5 877.8V882.8M788.5 878.9V881.3M789.5 877.7V881.6M790.5 876.8V880.4M791.5 877.5V882.5M792.5 877.0V881.3M793.5 878.4V881.3M794.5 877.4V882.3M795.5 878.4V881.6M796.5 876.4V880.9M797.5 877.9V883.1M798.5 878.9V882.4M799.5 876.3V882.5M800.5 873.4V882.6M801.5 877.0V882.8M802.5 877.0V881.2M803.5 876.8V881.9M804.5 878.7V883.4M805.5 877.9V883.1M806.5 876.5V879.5M807.5 821.3V879.5M808.5 748.6V821.3M809.5 706.5V748.6M810.5 677.3V706.5M811.5 657.3V677.3M812.5 642.6V657.3M813.5 633.4V642.6M814.5 624.7V633.4M815.5 617.8V624.8M816.5 615.4V620.7M817.5 614.8V618.2M818.5 613.8V618.3M819.5 612.2V618.9M820.5 609.9V613.8M821.5 608.4V610.5M822.5 605.9V612.1M823.5 608.8V612.9M824.5 607.8V611.0M825.5 605.3V611.0M826.5 605.1V608.8M827.5 605.6V608.5M828.5 603.1V609.2M829.5 605.0V609.4M830.5 606.1V608.4M831.5 603.9V608.8M832.5 603.7V605.7M833.5 602.0V607.2M834.5 602.7V605.8M835.5 603.2V606.4M836.5 603.3V606.4M837.5 604.1V606.2M838.5 602.0V605.9M839.5 601.5V606.3M840.5 603.0V605.5M841.5 602.7V606.0M842.5 604.7V610.1M843.5 604.1V606.7M844.5 604.1V608.2M845.5 605.1V607.1M846.5 605.2V607.0M847.5 605.1V613.1M848.5 603.3V608.2M849.5 604.0V607.1M850.5 605.0V610.8M851.5 603.6V606.5M852.5 604.2V607.1M853.5 604.4V607.1M854.5 602.3V606.3M855.5 604.0V606.7M856.5 603.6V610.1M857.5 602.3V608.6M858.5 602.3V608.8M859.5 603.1V607.8M860.5 602.3V605.9M861.5 602.7V606.6M862.5 603.6V606.5M863.5 603.0V605.7M864.5 602.2V607.4M865.5 603.4V607.6M866.5 603.5V607.2M867.5 601.5V608.0M868.5 603.7V607.3M869.5 603.9V606.9M870.5 603.7V607.2M871.5 604.1V607.9M872.5 603.4V606.8M873.5 603.1V606.8M874.5 602.8V606.5M875.5 600.0V607.0M876.5 602.9V606.7M877.5 603.6V606.7M878.5 602.7V608.3M879.5 601.1V607.1M880.5 603.7V607.5M881.5 601.1V607.6M882.5 603.9V606.7M883.5 602.3V606.9M884.5 602.9V605.8M885.5 603.3V606.2M886.5 603.1V606.2M887.5 602.6V606.7M888.5 602.6V604.2M889.5 603.7V606.5M890.5 602.8V605.2M891.5 602.7V607.2M892.5 603.1V606.1M893.5 603.3V607.1M894.5 604.2V606.7M895.5 600.9V608.4M896.5 602.5V606.0M897.5 602.3V606.9M898.5 603.9V607.4M899.5 604.4V607.6M900.5 603.1V608.2M901.5 604.7V606.3M902.5 603.9V606.8M903.5 603.9V607.0M904.5 602.6V606.6M905.5 604.4V608.3M906.5 604.8V608.5M907.5 602.1V608.5M908.5 601.8V606.3M909.5 601.9V605.7M910.5 603.7V608.6M911.5 603.4V608.9M912.5 603.6V608.9M913.5 604.8V608.5M914.5 602.7V607.0M915.5 597.5V608.9M916.5 597.5V608.0M917.5 603.2V607.3M918.5 602.5V611.3M919.5 603.6V605.1M920.5 600.0V607.0M921.5 602.4V604.9M922.5 602.5V605.0M923.5 602.8V605.7M924.5 603.5V605.9M925.5 603.4V607.8M926.5 601.9V609.5M927.5 602.3V606.2M928.5 603.6V606.1M929.5 603.3V606.9M930.5 604.0V607.5M931.5 604.0V608.0M932.5 603.9V608.8M933.5 602.9V607.0M934.5 603.8V607.9M935.5 604.6V608.6M936.5 604.1V611.8M937.5 604.0V608.7M938.5 603.2V607.6M939.5 603.2V606.3M940.5 601.7V605.5M941.5 604.0V607.2M942.5 604.2V606.4M943.5 602.8V606.5M944.5 602.7V606.3M945.5 602.2V608.3M946.5 601.7V611.4M947.5 603.9V606.8M948.5 600.0V606.8M949.5 600.0V606.4M950.5 600.7V604.4M951.5 603.3V606.3M952.5 601.3V605.5M953.5 599.0V605.7M954.5 602.9V608.2M955.5 602.6V606.1M956.5 602.6V605.3M957.5 602.0V606.0M958.5 603.7V606.2M959.5 602.8V609.6M960.5 601.9V607.9M961.5 603.4V606.2M962.5 598.7V605.8M963.5 603.2V605.7M964.5 601.3V606.2M965.5 601.4V606.1M966.5 604.3V606.2M967.5 603.8V606.0M968.5 603.9V606.9M969.5 604.5V607.1M970.5 603.2V607.8M971.5 605.5V608.9M972.5 602.2V608.9M973.5 602.7V609.4M974.5 602.9V608.5M975.5 603.2V605.7M976.5 601.2V605.5M977.5 601.2V604.2M978.5 603.9V607.1M979.5 602.9V605.9M980.5 604.2V608.2M981.5 603.7V615.5M982.5 615.5V675.6M983.5 675.6V723.2M984.5 723.2V756.7M985.5 756.7V784.1M986.5 784.1V806.3M987.5 806.3V820.5M988.5 820.5V834.6M989.5 832.9V844.8M990.5 844.2V849.9M991.5 849.8V860.5M992.5 858.0V865.7M993.5 864.7V866.4M994.5 864.4V868.3M995.5 865.4V870.3M996.5 867.0V871.9M997.5 869.9V875.6M998.5 869.9V878.2M999.5 876.4V878.2M1000.5 876.2V879.2M1001.5 872.7V878.3M1002.5 870.9V879.0M1003.5 870.9V877.8M1004.5 874.4V879.4M1005.5 878.0V880.6M1006.5 877.7V883.4M1007.5 879.2V882.1M1008.5 876.9V880.6M1009.5 873.5V880.6M1010.5 877.3V880.8M1011.5 876.7V880.9M1012.5 876.7V878.9M1013.5 877.5V879.8M1014.5 878.3V882.4M1015.5 878.7V881.9M1016.5 876.7V881.9M1017.5 878.3V881.9M1018.5 877.0V883.3M1019.5 875.8V882.7M1020.5 879.3V882.7M1021.5 879.7V881.2M1022.5 878.0V880.8M1023.5 878.7V881.7M1024.5 878.5V881.5M1025.5 880.1V882.5M1026.5 879.2V882.5M1027.5 880.3V882.5M1028.5 878.5V882.1M1029.5 878.8V880.4M1030.5 875.2V882.7M1031.5 877.7V881.4M1032.5 877.8V884.0M1033.5 876.6V884.0M1034.5 878.0V882.3M1035.5 876.6V881.0M1036.5 878.0V880.0M1037.5 875.9V881.6M1038.5 877.1V881.6M1039.5 876.0V880.4M1040.5 876.1V881.1M1041.5 877.9V879.6M1042.5 876.4V880.9M1043.5 875.5V881.6M1044.5 877.4V881.6M1045.5 877.1V882.2M1046.5 873.1V881.8M1047.5 879.0V881.9M1048.5 877.6V886.0M1049.5 878.4V885.7M1050.5 877.5V881.4M1051.5 878.1V880.2M1052.5 877.9V882.2M1053.5 877.9V881.6M1054.5 877.6V881.8M1055.5 877.2V881.8M1056.5 878.6V880.7M1057.5 879.1V883.0M1058.5 876.3V882.0M1059.5 875.2V880.3M1060.5 877.1V879.8M1061.5 878.3V882.4M1062.5 876.9V882.3M1063.5 878.4V882.3M1064.5 877.7V880.7M1065.5 876.4V880.7M1066.5 876.9V881.2M1067.5 877.1V880.6M1068.5 877.7V880.2M1069.5 862.6V880.4M1070.5 776.3V862.6M1071.5 721.9V776.3M1072.5 685.3V721.9M1073.5 661.9V685.3M1074.5 646.2V661.9M1075.5 636.8V646.2M1076.5 630.3V636.8M1077.5 621.5V630.3M1078.5 616.0V621.5M1079.5 615.1V618.8M1080.5 613.8V618.1M1081.5 613.1V618.3M1082.5 609.4V615.4M1083.5 606.8V612.1M1084.5 606.0V610.4M1085.5 607.0V609.8M1086.5 606.3V611.1M1087.5 607.5V611.3M1088.5 605.8V610.5M1089.5 604.5V606.4M1090.5 602.1V606.4M1091.5 604.7V608.3M1092.5 603.9V609.5M1093.5 602.9V606.9M1094.5 603.6V609.0M1095.5 603.7V608.0M1096.5 602.8V608.4M1097.5 602.9V606.6M1098.5 603.5V606.8M1099.5 605.5V608.9M1100.5 604.6V609.7M1101.5 604.4V608.7M1102.5 604.6V607.8M1103.5 605.9V607.8M1104.5 602.5V607.3M1105.5 602.8V607.6M1106.5 602.8V607.1M1107.5 602.1V606.8M1108.5 602.5V606.7M1109.5 601.9V603.9M1110.5 602.1V605.7M1111.5 601.5V604.4M1112.5 602.0V606.2M1113.5 602.9V605.7M1114.5 602.9V607.7M1115.5 603.8V613.2M1116.5 601.9V613.2M1117.5 601.2V607.2M1118.5 602.8V606.1M1119.5 601.9V607.0M1120.5 602.9V605.9M1121.5 602.7V606.2M1122.5 602.8V607.2M1123.5 602.8V606.6M1124.5 603.3V607.3M1125.5 601.9V606.3M1126.5 604.8V608.7M1127.5 603.8V607.2M1128.5 602.2V605.9M1129.5 602.2V605.1M1130.5 602.1V607.5M1131.5 602.3V607.7M1132.5 603.2V607.2M1133.5 602.7V607.2M1134.5 602.7V606.9M1135.5 603.1V608.5M1136.5 603.9V606.4M1137.5 603.0V606.4M1138.5 604.8V607.1M1139.5 603.4V606.8M1140.5 603.4V606.9M1141.5 604.5V607.2M1142.5 604.0V608.3M1143.5 603.2V606.5M1144.5 604.1V608.1M1145.5 601.0V606.5M1146.5 602.2V605.9M1147.5 603.1V604.9M1148.5 600.9V607.1M1149.5 601.1V608.2M1150.5 603.0V606.5M1151.5 603.1V605.5M1152.5 603.7V608.5M1153.5 604.0V606.8M1154.5 603.2V606.9M1155.5 603.2V606.7M1156.5 602.4V605.4M1157.5 604.2V643.8M1158.5 643.8V695.6M1159.5 695.6V738.7M1160.5 738.7V770.5M1161.5 770.5V792.1M1162.5 792.1V814.8M1163.5 814.8V827.6M1164.5 826.7V839.8M1165.5 835.4V847.6M1166.5 846.2V855.7M1167.5 855.7V864.5M1168.5 864.4V867.0M1169.5 865.1V868.6M1170.5 865.2V868.7M1171.5 866.5V870.7M1172.5 868.6V872.1M1173.5 870.8V876.3M1174.5 872.9V876.4M1175.5 876.0V878.9M1176.5 874.8V878.3M1177.5 873.2V876.3M1178.5 873.7V877.1M1179.5 874.7V879.7M1180.5 874.7V882.3M1181.5 876.5V882.3M1182.5 876.7V881.0M1183.5 875.8V880.1M1184.5 873.7V880.2M1185.5 875.7V880.2M1186.5 875.7V881.9M1187.5 878.0V881.5M1188.5 879.3V881.9M1189.5 877.5V881.9M1190.5 877.9V881.7M1191.5 879.1V881.6M1192.5 878.5V882.7M1193.5 878.0V882.6M1194.5 877.7V882.6M1195.5 877.5V883.5M1196.5 876.4V881.0M1197.5 878.7V882.4M1198.5 878.4V880.5M1199.5 877.6V884.7M1200.5 878.1V880.4M1201.5 878.1V881.6M1202.5 878.8V881.8M1203.5 878.1V882.3M1204.5 877.5V881.2M1205.5 877.9V882.3M1206.5 878.6V880.8M1207.5 877.4V881.9M1208.5 879.7V882.7M1209.5 876.8V880.6M1210.5 875.7V881.6M1211.5 876.5V881.4M1212.5 877.7V881.7M1213.5 878.3V882.3M1214.5 878.2V882.3M1215.5 877.7V880.2M1216.5 876.9V881.2M1217.5 875.7V879.8M1218.5 875.3V879.1M1219.5 875.2V881.4M1220.5 879.0V881.4M1221.5 876.6V881.8M1222.5 877.7V881.3M1223.5 877.7V880.4M1224.5 876.9V881.4M1225.5 878.4V881.2M1226.5 875.0V880.7M1227.5 875.0V880.2M1228.5 876.3V880.8M1229.5 875.2V882.1M1230.5 877.1V880.0M1231.5 877.3V879.9M1232.5 877.3V881.0M1233.5 876.1V880.1M1234.5 876.1V880.6M1235.5 877.2V880.5M1236.5 877.5V881.9M1237.5 878.5V883.2M1238.5 876.3V879.2M1239.5 877.2V880.4M1240.5 876.8V879.6M1241.5 878.5V881.4M1242.5 876.8V882.9M1243.5 876.5V880.3M1244.5 877.8V886.0M1245.5 877.8V880.4M1246.5 878.2V881.6M1247.5 879.3V881.6M1248.5 879.1V881.8M1249.5 877.0V882.2M1250.5 876.5V881.9M1251.5 877.2V883.2M1252.5 875.3V880.2M1253.5 876.2V880.5M1254.5 878.7V882.2M1255.5 878.5V881.2M1256.5 877.8V881.0M1257.5 877.0V880.0M1258.5 878.0V880.6M1259.5 876.4V880.4M1260.5 873.4V878.3M1261.5 875.3V879.6M1262.5 876.9V879.6M1263.5 874.8V879.6M1264.5 875.2V879.6M1265.5 877.4V881.7M1266.5 877.4V880.1M1267.5 877.5V879.0M1268.5 877.8V880.5M1269.5 878.1V880.5M1270.5 878.6V881.7M1271.5 877.4V879.7M1272.5 877.7V879.6M1273.5 876.8V879.1M1274.5 876.7V881.4M1275.5 877.3V880.8M1276.5 876.5V880.8M1277.5 878.9V880.5M1278.5 877.9V883.2M1279.5 877.2V881.5M1280.5 877.7V881.0M1281.5 874.0V880.7M1282.5 874.0V882.5M1283.5 878.3V882.7M1284.5 878.2V880.7M1285.5 878.9V881.2M1286.5 877.6V881.2M1287.5 875.7V881.2M1288.5 878.1V881.9M1289.5 878.4V881.9M1290.5 879.0V882.7M1291.5 878.5V882.6M1292.5 877.1V882.7M1293.5 876.1V880.0M1294.5 876.2V880.4M1295.5 876.2V880.0M1296.5 876.2V879.7M1297.5 877.0V879.8M1298.5 876.2V880.7M1299.5 878.3V881.4M1300.5 878.3V882.3M1301.5 879.6V882.8M1302.5 878.8V882.8M1303.5 877.7V883.0M1304.5 877.3V881.2M1305.5 878.5V881.9M1306.5 878.5V880.4M1307.5 878.5V882.0M1308.5 876.3V881.4M1309.5 878.9V881.2M1310.5 878.7V881.2M1311.5 877.9V880.3M1312.5 877.7V879.2M1313.5 877.7V880.7M1314.5 878.7V883.5M1315.5 878.3V883.5M1316.5 876.3V880.9M1317.5 877.7V880.2M1318.5 877.0V881.7M1319.5 877.9V881.9M1320.5 878.6V881.6M1321.5 878.5V881.7M1322.5 876.6V881.3M1323.5 877.7V882.3M1324.5 877.9V880.8M1325.5 876.0V881.1M1326.5 876.0V880.4M1327.5 874.6V881.6M1328.5 877.8V880.6M1329.5 878.5V883.0M1330.5 878.1V882.1M1331.5 876.3V881.3M1332.5 879.3V882.3M1333.5 875.5V881.4M1334.5 879.8V882.9M1335.5 878.7V882.3M1336.5 877.0V880.1M1337.5 877.0V880.8M1338.5 875.8V881.9M1339.5 876.4V880.2M1340.5 877.7V882.1M1341.5 878.2V882.3M1342.5 879.1V882.1M1343.5 880.3V883.2M1344.5 878.9V883.7M1345.5 877.5V881.6M1346.5 878.8V882.5M1347.5 879.0V882.4M1348.5 876.1V881.7M1349.5 878.0V880.7M1350.5 878.2V882.5M1351.5 877.1V882.5M1352.5 878.4V882.4M1353.5 876.2V881.3M1354.5 876.3V881.4M1355.5 875.5V880.5M1356.5 879.2V883.6M1357.5 879.0V882.5M1358.5 875.4V881.4M1359.5 877.4V881.8M1360.5 875.6V881.9M1361.5 877.6V881.9M1362.5 877.3V881.3M1363.5 878.0V881.6M1364.5 879.5V882.0M1365.5 877.3V881.7M1366.5 877.6V881.8M1367.5 879.7V881.8M1368.5 878.1V881.5M1369.5 878.8V881.8M1370.5 876.0V881.8M1371.5 878.3V882.4M1372.5 876.6V881.9M1373.5 878.1V880.8M1374.5 878.3V883.6M1375.5 876.5V882.4M1376.5 878.1V881.7M1377.5 878.0V882.0M1378.5 878.1V881.0M1379.5 876.5V879.5M1380.5 878.3V881.9M1381.5 878.5V881.9M1382.5 878.2V881.7M1383.5 877.3V882.3M1384.5 878.5V883.3M1385.5 877.7V883.3M1386.5 878.7V882.8M1387.5 877.4V881.2M1388.5 877.6V881.2M1389.5 879.0V882.5M1390.5 877.4V881.9M1391.5 877.8V881.8M1392.5 879.1V884.0M1393.5 875.2V881.1M1394.5 877.2V880.3M1395.5 876.3V881.3M1396.5 877.0V881.4M1397.5 878.2V882.0M1398.5 879.7V884.1M1399.5 879.7V882.6M1400.5 878.9V883.2M1401.5 878.1V881.4M1402.5 878.1V881.4M1403.5 873.7V881.6M1404.5 878.6V881.8M1405.5 877.7V885.5M1406.5 877.3V881.6M1407.5 878.2V880.7M1408.5 875.3V880.4M1409.5 875.3V880.1M1410.5 878.6V881.7M1411.5 878.6V881.5M1412.5 879.9V881.5M1413.5 877.2V880.0M1414.5 875.9V879.7M1415.5 876.4V879.9M1416.5 877.3V880.4M1417.5 876.6V881.6M1418.5 877.2V880.1M1419.5 878.9V881.5M1420.5 878.2V881.5M1421.5 877.1V880.2M1422.5 875.1V880.5M1423.5 877.3V880.2M1424.5 876.7V880.7M1425.5 878.0V883.7M1426.5 878.4V881.6M1427.5 878.8V880.6M1428.5 878.4V881.0M1429.5 875.5V880.6M1430.5 877.4V879.4M1431.5 878.2V880.5M1432.5 877.7V882.0M1433.5 875.5V879.4M1434.5 876.9V879.3M1435.5 876.9V879.8M1436.5 876.7V879.8M1437.5 877.1V880.7M1438.5 877.6V881.0M1439.5 878.3V882.5M1440.5 877.6V882.5M1441.5 877.3V880.7M1442.5 878.2V881.6M1443.5 876.0V882.3M1444.5 877.3V880.9M1445.5 877.3V881.3M1446.5 877.3V881.7M1447.5 878.9V880.8M1448.5 879.6V882.7M1449.5 878.5V881.8M1450.5 876.9V883.0M1451.5 878.2V883.0M1452.5 876.7V880.6M1453.5 876.0V881.5M1454.5 877.5V881.5M1455.5 878.4V881.3M1456.5 878.2V881.7M1457.5 878.0V881.9M1458.5 877.7V881.8M1459.5 877.1V880.5M1460.5 875.9V881.2M1461.5 875.9V881.8M1462.5 878.5V883.2M1463.5 878.5V883.1M1464.5 877.1V881.5M1465.5 877.8V881.7M1466.5 876.3V882.2M1467.5 876.3V882.7M1468.5 876.3V881.1M1469.5 876.3V880.8M1470.5 875.8V882.9M1471.5 877.3V880.6M1472.5 878.1V880.6M1473.5 876.4V881.4M1474.5 877.3V883.3M1475.5 879.4V883.3M1476.5 878.1V881.4M1477.5 878.2V882.1M1478.5 877.3V880.9M1479.5 878.6V882.4M1480.5 877.1V882.6M1481.5 877.3V881.8M1482.5 877.0V881.8M1483.5 876.9V879.4M1484.5 876.8V880.1M1485.5 877.7V879.6M1486.5 876.4V880.0M1487.5 877.1V880.0M1488.5 877.2V881.0M1489.5 878.4V883.0M1490.5 876.8V882.4M1491.5 876.8V879.8M1492.5 876.9V881.5M1493.5 878.7V881.8M1494.5 876.2V879.7M1495.5 876.9V880.6M1496.5 877.4V879.7M1497.5 877.3V879.9M1498.5 877.9V879.9M1499.5 877.0V879.9M1500.5 878.4V881.2M1501.5 878.5V882.0M1502.5 878.5V882.2M1503.5 877.7V881.3M1504.5 878.9V881.1M1505.5 877.9V881.6M1506.5 878.1V883.4M1507.5 875.4V881.9M1508.5 878.6V881.1M1509.5 876.9V881.4M1510.5 876.4V880.4M1511.5 877.4V880.4M1512.5 877.4V880.9M1513.5 878.3V882.0M1514.5 878.9V882.8M1515.5 879.3V881.7M1516.5 879.3V882.7M1517.5 875.3V882.7M1518.5 876.4V885.4M1519.5 877.5V885.4M1520.5 876.8V881.5M1521.5 875.7V880.8M1522.5 876.0V880.6M1523.5 877.4V882.4M1524.5 878.4V883.2M1525.5 878.4V884.8M1526.5 879.4V884.8M1527.5 878.1V881.4M1528.5 878.1V880.1M1529.5 878.5V880.9M1530.5 878.8V881.1M1531.5 876.1V881.1M1532.5 876.1V882.5M1533.5 877.6V879.8M1534.5 876.0V879.4M1535.5 876.1V879.7M1536.5 877.6V880.9M1537.5 878.4V880.7M1538.5 876.0V880.3M1539.5 876.0V881.6M1540.5 878.4V884.8M1541.5 875.8V879.5M1542.5 877.3V882.5M1543.5 877.1V881.6M1544.5 879.6V883.6M1545.5 878.8V882.6M1546.5 877.8V882.6M1547.5 879.4V883.4M1548.5 877.9V881.4M1549.5 875.7V883.0M1550.5 877.6V881.3M1551.5 879.7V881.2M1552.5 878.3V880.9M1553.5 879.2V881.9M1554.5 878.2V881.4M1555.5 878.3V882.1M1556.5 879.7V881.3M1557.5 878.5V881.8M1558.5 878.6V883.4M1559.5 878.4V883.4M1560.5 879.3V883.7M1561.5 877.6V880.7M1562.5 877.9V880.5M1563.5 877.1V881.0M1564.5 876.9V880.1M1565.5 877.8V881.0M1566.5 878.6V880.4M1567.5 878.6V881.0M1568.5 878.9V881.2M1569.5 878.5V881.5M1570.5 878.4V881.8M1571.5 877.5V880.6M1572.5 875.6V879.4M1573.5 877.8V881.3M1574.5 877.3V880.8M1575.5 876.5V881.5M1576.5 877.7V882.1M1577.5 877.7V881.4M1578.5 877.7V881.4M1579.5 878.5V880.5M1580.5 877.1V881.3M1581.5 877.4V879.7M1582.5 876.0V880.2M1583.5 877.2V880.6M1584.5 877.2V881.3M1585.5 878.3V879.8M1586.5 878.0V881.3M1587.5 875.7V880.1M1588.5 877.4V883.4M1589.5 876.0V883.4M1590.5 876.8V881.8M1591.5 876.8V880.8M1592.5 877.2V883.3M1593.5 875.9V881.7M1594.5 879.6V882.6M1595.5 877.9V882.1M1596.5 878.6V881.6M1597.5 878.2V882.1M1598.5 875.6V882.7M1599.5 876.5V881.9M1600.5 876.0V879.0M1601.5 877.0V880.8M1602.5 876.5V879.9M1603.5 877.1V878.6M1604.5 875.8V880.3M1605.5 875.0V879.4M1606.5 876.7V880.4M1607.5 877.1V881.1M1608.5 878.1V883.2M1609.5 877.9V880.1M1610.5 878.4V881.6M1611.5 877.8V879.9M1612.5 876.7V879.7M1613.5 878.1V880.3M1614.5 877.8V880.5M1615.5 876.1V879.9M1616.5 877.3V880.7M1617.5 877.8V883.3M1618.5 879.3V881.4M1619.5 878.6V880.4M1620.5 877.5V882.0M1621.5 876.6V880.2M1622.5 876.3V881.2M1623.5 877.4V880.6M1624.5 876.6V880.0M1625.5 877.4V879.9M1626.5 875.9V880.3M1627.5 876.6V880.1M1628.5 877.6V879.5M1629.5 878.1V881.8M1630.5 877.0V883.5M1631.5 877.0V881.2M1632.5 877.0V879.8M1633.5 878.6V881.1M1634.5 878.4V882.0M1635.5 875.4V880.6M1636.5 878.5V882.6M1637.5 878.3V881.9M1638.5 878.3V881.3M1639.5 878.5V881.5M1640.5 878.8V883.6M1641.5 877.0V882.1M1642.5 878.3V881.9M1643.5 878.0V881.9M1644.5 877.4V880.8M1645.5 877.4V882.0M1646.5 877.0V883.4M1647.5 879.1V883.9M1648.5 877.7V882.5M1649.5 876.7V881.4M1650.5 877.1V880.7M1651.5 878.9V882.8M1652.5 879.9V882.5M1653.5 877.5V880.0M1654.5 877.5V881.6M1655.5 878.9V880.4M1656.5 879.1V881.4M1657.5 877.3V882.1M1658.5 879.0V881.2M1659.5 877.2V883.3M1660.5 875.0V881.9M1661.5 876.8V882.0M1662.5 876.4V882.3M1663.5 879.1V884.0M1664.5 878.9V882.3M1665.5 876.3V881.9M1666.5 876.3V881.9M1667.5 877.7V880.8M1668.5 877.9V881.4M1669.5 877.9V881.4M1670.5 877.4V880.8M1671.5 877.9V881.6M1672.5 878.0V885.5M1673.5 877.5V885.5M1674.5 878.0V880.8M1675.5 877.2V881.1M1676.5 875.6V880.5M1677.5 878.0V880.8M1678.5 877.1V881.0M1679.5 875.2V881.4M1680.5 878.0V883.3M1681.5 877.1V882.3M1682.5 877.1V881.5M1683.5 877.2V881.2M1684.5 877.7V880.6M1685.5 877.6V880.8M1686.5 877.4V881.1M1687.5 878.2V881.1M1688.5 877.4V879.4M1689.5 876.7V879.0M1690.5 877.5V880.7M1691.5 878.0V881.4M1692.5 876.3V881.5M1693.5 877.2V880.2M1694.5 874.8V880.1M1695.5 876.6V879.8M1696.5 877.2V880.6M1697.5 877.7V879.8M1698.5 876.4V879.8M1699.5 877.9V880.1M1700.5 878.5V881.7M1701.5 876.2V879.4M1702.5 877.3V884.9M1703.5 875.0V882.0M1704.5 877.6V883.5M1705.5 877.6V881.3M1706.5 879.4V882.2M1707.5 878.3V881.9M1708.5 876.7V882.0M1709.5 875.9V879.5M1710.5 878.5V880.8M1711.5 878.9V881.7M1712.5 877.8V880.7M1713.5 877.8V881.0M1714.5 877.9V880.8M1715.5 877.9V880.8M1716.5 877.3V880.8M1717.5 877.3V880.5M1718.5 877.0V881.2M1719.5 879.4V883.0M1720.5 879.0V881.6M1721.5 878.8V881.7M1722.5 878.2V883.5M1723.5 878.4V882.1M1724.5 878.5V882.1M1725.5 877.4V881.9M1726.5 878.5V882.1M1727.5 878.2V882.1M1728.5 878.7V881.8M1729.5 878.2V881.8M1730.5 878.4V882.7M1731.5 878.1V881.7M1732.5 878.1V882.7M1733.5 877.9V882.1M1734.5 875.7V880.6M1735.5 877.4V880.6M1736.5 877.3V880.8M1737.5 878.0V880.6M1738.5 878.5V880.3M1739.5 877.1V883.4M1740.5 877.8V881.3M1741.5 877.8V881.2M1742.5 876.4V881.2M1743.5 877.8V883.5M1744.5 878.9V883.5M1745.5 879.7V882.4M1746.5 878.5V880.4M1747.5 878.4V882.2M1748.5 877.8V881.4M1749.5 876.5V882.3M1750.5 878.4V881.7"/><rect x="3" y="284.800" width="1748" height="1.5" fill="#f6f6f6"/><rect x="3" y="602.500" width="1748" height="1.5" fill="#f6f6f6"/><line x1="64.5" y1="286" x2="64.5" y2="603" stroke="#ff1010" stroke-width="1.4" stroke-dasharray="14 7" stroke-dashoffset="8"/></g></svg><div class="ylab" style="top:503.9px;color:#f5ea2e">-420 mV</div><div class="ylab" style="top:457.3px;color:#f5ea2e">0 V</div><div class="ylab" style="top:410.7px;color:#f5ea2e">420 mV</div><div class="ylab" style="top:364.1px;color:#f5ea2e">840 mV</div><div class="ylab" style="top:317.5px;color:#f5ea2e">1.26 V</div><div class="ylab" style="top:270.9px;color:#f5ea2e">1.68 V</div><div class="ylab" style="top:224.3px;color:#f5ea2e">2.10 V</div><div class="ylab" style="top:177.7px;color:#f5ea2e">2.52 V</div><div class="ylab" style="top:131.2px;color:#f5ea2e">2.94 V</div><div class="ylab" style="top:84.6px;color:#f5ea2e">3.36 V</div><div class="ylab" style="top:973.8px;color:#22c8d0">-1.04 V</div><div class="ylab" style="top:927.2px;color:#22c8d0">-520 mV</div><div class="ylab" style="top:880.6px;color:#22c8d0">0 V</div><div class="ylab" style="top:834.1px;color:#22c8d0">520 mV</div><div class="ylab" style="top:787.5px;color:#22c8d0">1.04 V</div><div class="ylab" style="top:740.9px;color:#22c8d0">1.56 V</div><div class="ylab" style="top:694.3px;color:#22c8d0">2.08 V</div><div class="ylab" style="top:647.7px;color:#22c8d0">2.60 V</div><div class="ylab" style="top:601.1px;color:#22c8d0">3.12 V</div><div class="ylab" style="top:554.5px;color:#22c8d0">3.64 V</div><div class="xlab" style="left:138.4px">-800 ns</div><div class="xlab" style="left:313.1px">-600 ns</div><div class="xlab" style="left:487.9px">-400 ns</div><div class="xlab" style="left:662.6px">-200 ns</div><div class="xlab" style="left:837.4px">0 s</div><div class="xlab" style="left:1012.2px">200 ns</div><div class="xlab" style="left:1186.9px">400 ns</div><div class="xlab" style="left:1361.7px">600 ns</div><div class="xlab" style="left:1536.4px">800 ns</div><div class="ro" style="left:64px;top:256px;width:140px;height:29px">v: 1.603 V</div><div class="ro" style="left:64px;top:378px;width:180px;height:52px">Δv: 1.561 V<br>Δv/Δt: 5.11 MV/s</div><div class="ro" style="left:64px;top:603px;width:140px;height:29px">v: 3.164 V</div><div class="ro" style="left:710px;top:90px;width:139px;height:29px">t: -31.350 ns</div><div class="ro" style="left:913px;top:90px;width:140px;height:52px">Δt: 305.263 ns<br>1/Δt: 3.28 MHz</div><div class="ro" style="left:1118px;top:558px;width:139px;height:29px">t: 273.913 ns</div><svg width="1920" height="1079" viewBox="0 0 1920 1079"><path d="M593 36.500H586.700V52.500H593M1161 36.500H1167.300V52.500H1161" stroke="#dcdcdc" stroke-width="1.5" fill="none"/><rect x="587.500" y="43.800" width="579" height="2" fill="#c4c4c4"/><path d="M869 33.5H884L876.5 38Z" fill="#f08a24"/><path d="M871 40.5H883V52H879.5L877 55.5L874.5 52H871Z" fill="#222" stroke="#f08a24" stroke-width="1.5"/><text x="877" y="50" font-size="9.5" font-weight="700" fill="#f08a24" text-anchor="middle" font-family="Liberation Sans, sans-serif">T</text><path d="M868 57H887L877.5 66.5Z" fill="#f08a24"/><path d="M868.3 67.8H886.3V87.5H881.5L877.3 94L873 87.5H868.3Z" fill="#000" stroke="#f08a24" stroke-width="1.7"/><text x="877.3" y="83.5" font-size="15" font-weight="700" fill="#f08a24" text-anchor="middle" font-family="Liberation Sans, sans-serif">T</text><path d="M1710 64H1741.500Q1744.500 64 1744.500 67V98Z" fill="#4f4f4d"/><circle cx="1737.3" cy="70.6" r="3.9" fill="none" stroke="#aaaaaa" stroke-width="1.5"/><path d="M1734.300 73.700L1728.200 79.700" stroke="#aaaaaa" stroke-width="2.4" stroke-linecap="round"/><path d="M1729.5 241L1742 230V239.0H1751V243.0H1742V251Z" fill="#f7ea2a"/><path d="M1729.5 411L1742 400V409.0H1751V413.0H1742V421Z" fill="#f7ea2a"/><circle cx="1761.8" cy="503.5" r="1.9" fill="#d8d8d8"/><circle cx="1761.8" cy="511.5" r="1.9" fill="#d8d8d8"/><circle cx="1761.8" cy="519.5" r="1.9" fill="#d8d8d8"/><path d="M8.5 278.5H29.5L35 284V297L29.5 302.5H8.5Q6.5 302.5 6.5 300.5V280.5Q6.5 278.5 8.5 278.5Z" fill="#2a2708" stroke="#e6dc30" stroke-width="1"/><path d="M9 746H33L41.5 758L33 770H9Q7 770 7 768V748Q7 746 9 746Z" fill="#22cdd2"/><text x="21.5" y="763" font-size="13.5" fill="#1a1a1a" text-anchor="middle" font-family="Liberation Sans, sans-serif" letter-spacing="2.2">C2</text></svg><div style="position:absolute;height:25px;line-height:25px;text-align:center;font-size:17px;left:820px;top:57px;width:30px;background:#d8d030;color:#333;border-radius:3px">C1</div><div style="position:absolute;height:25px;line-height:25px;text-align:center;font-size:17px;left:850px;top:57px;width:22px;background:rgba(58,58,58,.92);color:#ccc;border-radius:0 3px 3px 0;text-align:left;padding-left:5px">A</div><div style="position:absolute;height:25px;line-height:25px;text-align:center;font-size:17px;left:1094px;top:525px;width:24px;background:#3a3a3a;color:#d0d0d0;border-radius:3px 0 0 3px">B</div><div style="position:absolute;height:25px;line-height:25px;text-align:center;font-size:17px;left:1118px;top:525px;width:30px;background:#1fb5b8;color:#222;border-radius:3px">C2</div><div style="position:absolute;left:7px;top:273px;width:25px;height:25px;background:rgba(64,64,64,.9);border-radius:3px 0 0 3px"></div><div style="position:absolute;height:25px;line-height:25px;text-align:center;font-size:17px;left:9px;top:273px;width:18px;background:#2a8bd8;color:#fff;border-radius:50%">A</div><div style="position:absolute;height:25px;line-height:25px;text-align:center;font-size:17px;left:31px;top:273px;width:29px;background:#ddd53a;color:#333;border-radius:4px">C1</div><div style="position:absolute;left:7px;top:591px;width:25px;height:25px;background:rgba(64,64,64,.9);border-radius:3px 0 0 3px"></div><div style="position:absolute;height:25px;line-height:25px;text-align:center;font-size:17px;left:9px;top:591px;width:18px;background:#2a8bd8;color:#fff;border-radius:50%">B</div><div style="position:absolute;height:25px;line-height:25px;text-align:center;font-size:17px;left:31px;top:591px;width:29px;background:#20b8bc;color:#222;border-radius:4px">C2</div><div id="rpanel" class="abs"></div><div class="abs" style="left:1785px;top:-3px;height:36px;line-height:36px;font-size:29.5px;font-weight:700;letter-spacing:-.8px;color:#fff;white-space:nowrap;transform:scaleX(.95);transform-origin:0 0">Tektronix</div><svg width="1920" height="1079" viewBox="0 0 1920 1079"><path d="M1815.3 26L1829.600 9.5H1835.500L1821 26Z" fill="#1fb8e0"/></svg><div class="abs" style="left:1769px;top:31px;width:151px;text-align:center;font-size:14.5px;font-weight:700;line-height:20px;color:#f4f4f4">添加新...</div><div class="btn" style="left:1777px;top:59px">光标</div><div class="btn" style="left:1849px;top:59px">注</div><div class="btn" style="left:1777px;top:105px">测量</div><div class="btn" style="left:1849px;top:105px">搜索</div><div class="btn" style="left:1777px;top:151px">结果表</div><div class="btn" style="left:1849px;top:151px">绘图</div><div class="sep" style="left:1773px;top:197px;width:144px"></div><div class="sep" style="left:1773px;top:941px;width:144px"></div><div class="btn" style="left:1776px;top:951px"></div><svg width="1920" height="1079" viewBox="0 0 1920 1079"><rect x="1796.5" y="958.5" width="22" height="19" fill="none" stroke="#d0d0d0" stroke-width="2" stroke-dasharray="4 2.6"/><circle cx="1809.5" cy="965.5" r="4.6" fill="#2c2c2c" stroke="#d0d0d0" stroke-width="1.7"/><path d="M1806 969L1801 973.5" stroke="#d0d0d0" stroke-width="2.6" stroke-linecap="round"/><path d="M1814 972L1822 975.5L1818.8 977L1820.8 980.5L1819 981.5L1817 978L1815 980.5Z" fill="#c8c8c8"/><g fill="none" stroke="#d8d8d8" stroke-width="1.6"><ellipse cx="1882.5" cy="957.5" rx="14" ry="4"/><path d="M1868.5 958.5L1872 983.5Q1882.5 989 1893 983.5L1896.500 958.5"/><path d="M1869 961.5Q1882.5 967 1896 961.5" /><path d="M1876.5 966.5L1877.5 983.5M1882.5 967V984.5M1888.500 966.5L1887.500 983.5" stroke-width="1.3"/><path d="M1879.500 955.500Q1882.500 953.500 1885.500 955.500" stroke-width="1.2"/></g></svg><div class="chb" style="left:3px"><div class="h" style="background:#4a4522;color:#f0e636">Ch 1</div><div class="l" style="top:22px">420 mV/div</div><div class="l" style="top:41px">1 MΩ</div><div class="l" style="top:60px">500 MHz</div><div class="l" style="left:73px;top:56px;font-size:10px;font-weight:700">B<span style="position:relative;top:3px;font-size:9px">w</span></div></div><div class="chb" style="left:98px"><div class="h" style="background:#22d2d8;color:#16323a">Ch 2</div><div class="l" style="top:22px">520 mV/div</div><div class="l" style="top:41px">终端</div><div class="l" style="top:60px">500 MHz</div><div class="l" style="left:73px;top:56px;font-size:10px;font-weight:700">B<span style="position:relative;top:3px;font-size:9px">w</span></div></div><div class="nb" style="left:731px"><i style="background:#e8445c"></i><span style="">3</span></div><div class="nb" style="left:776px"><i style="background:#9ad02e"></i><span style="">4</span></div><div class="nb" style="left:821px"><i style="background:#ff8c1a"></i><span style="">5</span></div><div class="nb" style="left:866px"><i style="background:#2a2cc8"></i><span style="">6</span></div><div class="nb" style="left:911px"><i style="background:#e044b4"></i><span style="">7</span></div><div class="nb" style="left:956px"><i style="background:#16d8a0"></i><span style="">8</span></div><div class="nb" style="left:1017px"><i style="background:#ff8c1a"></i><span class="t" style="">数学</span></div><div class="nb" style="left:1062px"><i style="background:#c4c4d4"></i><span class="t" style="">参考</span></div><div class="nb" style="left:1107px"><i style="background:#c060f0"></i><span class="t" style="">总线</span></div><div class="nb" style="left:1167px;color:#bdbdbd"><i style="background:#4e4e4e"></i><span class="t" style="font-size:15.5px">DVM</span></div><div class="nb" style="left:1218px;color:#bdbdbd"><i style="background:#4e4e4e"></i><span class="t" style="font-size:15.5px">AFG</span></div><div class="vsep" style="left:1006px"></div><div class="vsep" style="left:1157px"></div><div class="vsep" style="left:1268px"></div><div class="ib" style="left:1279px;width:200px"><div class="h">水平</div><div class="l" style="left:8px;top:22px">200 ns/div</div><div class="l" style="left:114px;top:22px">2 µs</div><div class="l" style="left:8px;top:41px">SR: 6.25 GS/s</div><div class="l" style="left:114px;top:41px">160 ps/pt</div><div class="l" style="left:8px;top:60px">RL: 12.5 kpts</div><div class="l" style="left:128px;top:60px">50%</div></div><svg width="1920" height="1079" viewBox="0 0 1920 1079"><path d="M1392.600 1062H1400.400V1069.500H1398.300L1396.500 1072.300L1394.700 1069.500H1392.600Z" fill="#111" stroke="#f08a24" stroke-width="1.2"/><text x="1396.500" y="1068.800" font-size="7.500" font-weight="700" fill="#fff" text-anchor="middle" font-family="Liberation Sans, sans-serif">T</text></svg><div class="ib" style="left:1484px;width:160px"><div class="h">触发</div><div class="abs" style="left:14px;top:23px;width:20px;height:16px;background:#f4ea30;border:1px solid #444;border-radius:4px;font-size:12px;line-height:14px;text-align:center;color:#222">1</div><div class="l" style="left:44px;top:22px;font-size:14.5px">欠幅</div><div class="l" style="left:8px;top:60px">U: 2 V&nbsp; L: 470.4 mV</div></div><svg width="1920" height="1079" viewBox="0 0 1920 1079"><path d="M1492 1053.500V1045.500H1495.500V1053.500H1499.500V1047.500H1502.500V1053.500H1504" fill="none" stroke="#2a2a90" stroke-width="1.2"/></svg><div class="ib" style="left:1649px;width:150px"><div class="h">采集</div><div class="l" style="left:8px;top:22px;font-size:14.5px">自动,</div><div class="l" style="left:89px;top:22px;font-size:14.5px">分析</div><div class="l" style="left:8px;top:41px"><span style="font-size:14.5px">取样</span>: 8 bits</div><div class="l" style="left:8px;top:60px">Single: 1 /1</div></div><div class="vsep" style="left:1810px"></div><div class="abs" style="left:1822px;top:998px;width:89px;height:35px;border-radius:6px;background:#fd1f28;border:1px solid #7a3030;color:#fff;font-weight:700;font-size:13.8px;line-height:33px;text-align:center">已停止</div><div class="abs" style="left:1821px;top:1041px;width:90px;height:36px;border-radius:4px;background:#c8c8c8;color:#2a2a2a;font-size:14.2px;line-height:17px;text-align:center;padding-top:1px">25 Feb 2020<br>4:23:00 PM</div><div id="dlg" class="abs"><div class="hd"></div><div class="lb" style="left:11px;top:13px;font-size:14.5px;color:#e4e4e4">光标</div><div class="lb" style="left:11px;top:55px">显示</div><div class="lb" style="left:229px;top:55px"><span style="letter-spacing:.45px">Readout Location</span></div><div class="lb" style="left:11px;top:126px">光标类型</div><div class="lb" style="left:229px;top:126px">源波形</div><div class="lb" style="left:11px;top:197px">光标 A 的源</div><div class="lb" style="left:229px;top:197px">光标 B 的源</div><div class="lb" style="left:11px;top:268px">光标 A 的 X 位置</div><div class="lb" style="left:229px;top:268px">光标 B 的 X 位置</div><div class="lb" style="left:11px;top:339px">光标 A 的 Y 位置</div><div class="lb" style="left:229px;top:339px">光标 B 的 Y 位置</div><div class="lb" style="left:11px;top:410px">光标模式</div><div class="abs" style="left:12px;top:74px;width:74px;height:42px;border-radius:7px;background:#27b5ea;border:2px solid #74c8e6;box-shadow:0 0 1px #74c8e6"><div class="abs" style="left:0;top:0;width:48px;height:38px;line-height:38px;text-align:center;font-size:14px;color:#222">开</div><div class="abs" style="left:48px;top:1px;width:21px;height:36px;border-radius:4px;background:linear-gradient(#cfcfcf,#b4b4b4);box-shadow:-1px 0 1px rgba(0,0,0,.3)"></div></div><div class="seg" style="left:233px;top:77px;width:182px"><div class="on" style="left:0;width:90px">刻度</div><div class="off" style="left:90px;width:92px;border-left:1px solid #8a8a8a">标记</div></div><div class="dd" style="left:15px;top:148px;font-size:14.6px">竖条与横条</div><div class="seg" style="left:233px;top:148px;width:182px"><div class="off" style="left:0;width:90px">相同</div><div class="on" style="left:90px;width:92px">拆分</div></div><div class="dd" style="left:15px;top:219px">Ch 1</div><div class="dd" style="left:233px;top:219px;width:182px">Ch 2</div><div class="inp" style="left:15px;top:290px">-31.3501 ns</div><div class="inp" style="left:233px;top:290px;width:182px">273.913 ns</div><div class="inp" style="left:15px;top:361px">1.6027 V</div><div class="inp" style="left:233px;top:361px;width:182px">3.1637 V</div><div class="abs" style="left:21px;top:370px;width:17px;height:17px;border-radius:50%;background:#3f8fd6;color:#fff;font-size:13px;font-weight:700;line-height:17px;text-align:center">A</div><div class="abs" style="left:239px;top:370px;width:17px;height:17px;border-radius:50%;background:#3f8fd6;color:#fff;font-size:13px;font-weight:700;line-height:17px;text-align:center">B</div><div class="seg" style="left:15px;top:432px;width:216px"><div class="on" style="left:0;width:108px">独立</div><div class="off" style="left:108px;width:108px;border-left:1px solid #8a8a8a">联动</div></div><div class="abs" style="left:384px;top:10px;width:25px;height:25px;border:2px solid #d4d4d4;border-radius:50%;color:#d8d8d8;font-size:19px;font-weight:700;line-height:21px;text-align:center">?</div></div><div class="abs" style="left:1446.5px;top:947.5px;font-family:'Liberation Serif',serif;font-weight:700;font-size:108.5px;line-height:120px;color:#0a0a9c;white-space:nowrap;letter-spacing:-.8px;text-shadow:0 0 1px rgba(20,20,160,.5)">Ag<span style="display:inline-block;margin-left:-2.5px;clip-path:inset(44px -6px 0 -6px)">i</span>te<span style="margin-left:1.5px">k</span></div><div class="abs" style="left:1580.6px;top:969.8px;width:20px;height:20px;border-radius:50%;background:#f01010"></div></body></html>
